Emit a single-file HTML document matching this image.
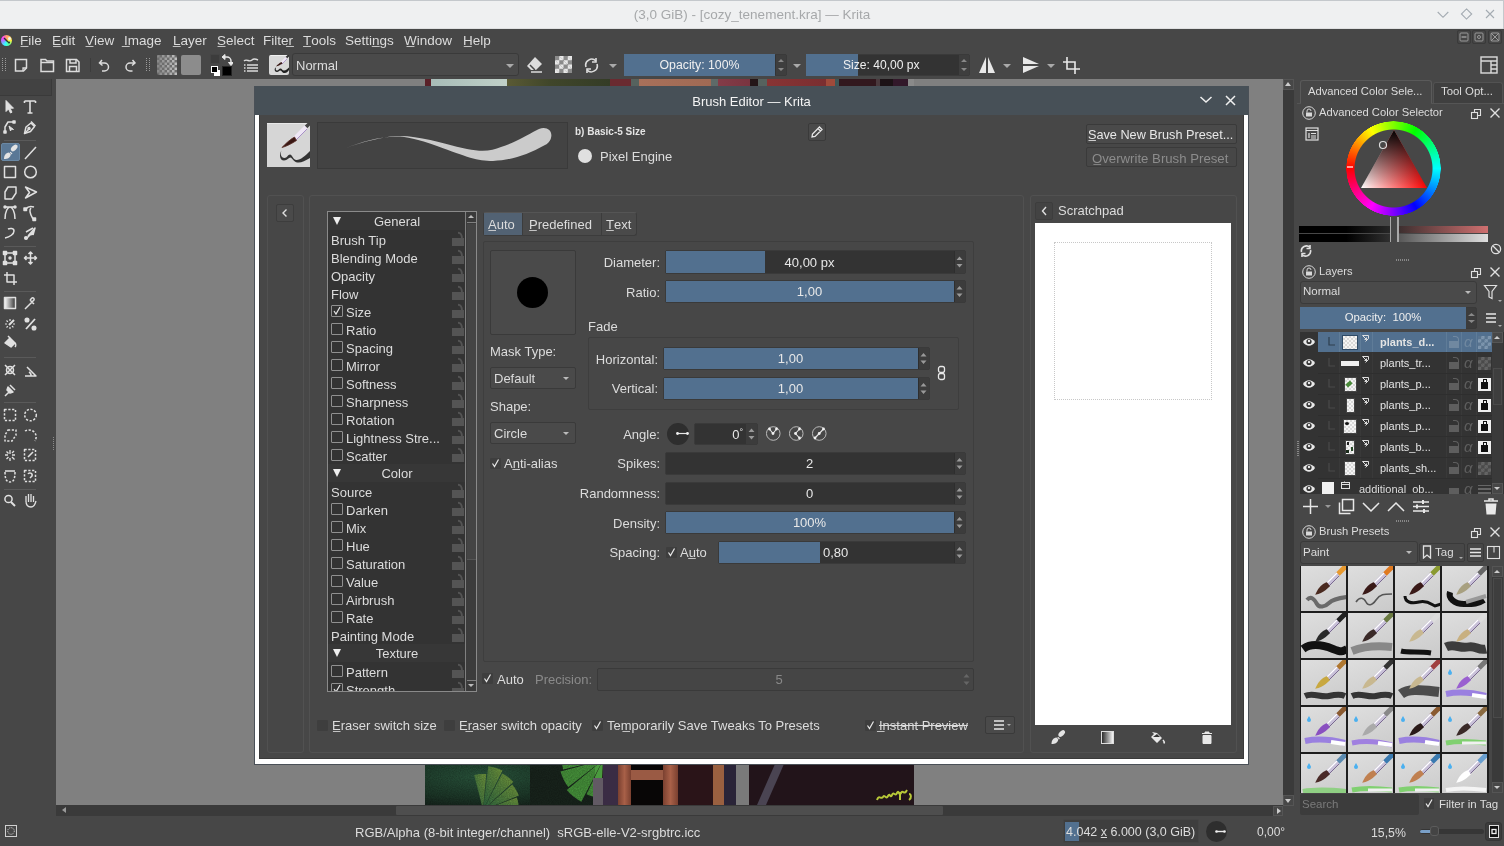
<!DOCTYPE html>
<html><head><meta charset="utf-8">
<style>
*{box-sizing:border-box;margin:0;padding:0}
html,body{width:1504px;height:846px;overflow:hidden;background:#474747;will-change:transform;font-family:"Liberation Sans",sans-serif;color:#dcdcdc;font-size:13px}
.a{position:absolute}
.t{position:absolute;white-space:nowrap;line-height:1}
</style></head><body>
<!-- title bar -->
<div class="a" style="left:0;top:0;width:1504px;height:29px;background:#eff0f1;border-bottom:1px solid #dfe0e1"></div>
<div class="t" style="left:0;width:1504px;text-align:center;top:8px;color:#a6a8aa;font-size:13.5px">(3,0 GiB) - [cozy_tenement.kra] — Krita</div>
<div class="a" style="left:0;top:0;width:1504px;height:1px;background:#c4c8cc"></div>
<div class="a" style="left:1503px;top:0;width:1px;height:29px;background:#c4c8cc"></div>
<svg class="a" style="left:1430px;top:4px" width="70" height="20" fill="none" stroke="#a4abb2" stroke-width="1.1"><path d="M7.7 8l5.3 5.3L18.3 8M36.5 4.9l5.2 5.1-5.2 5.1-5.1-5.1zM56 6l8 8M64 6l-8 8"/></svg>

<!-- menubar + toolbar -->
<div class="a" style="left:0;top:29px;width:1504px;height:50px;background:#474747"></div>

<!-- menubar -->
<div class="a" style="left:1px;top:34.5px;width:11px;height:11px;border-radius:50%;background:conic-gradient(from 0deg,#ff9a70,#ffee40 25%,#60ff90 40%,#30ffff 55%,#a080ff 72%,#ff40ff 85%,#ff9a70)"></div><svg class="a" style="left:1px;top:34.5px" width="11" height="11"><path d="M3 3l4 4" stroke="#2a3a2a" stroke-width="1.5"/><circle cx="8.5" cy="3.5" r="1.5" fill="#eef4ee"/><circle cx="8" cy="7.5" r="1" fill="#1a2a3a"/></svg>
<div class="t" style="top:34px;left:20px;font-size:13.5px">
<span class="a" style="left:0">F&#818;ile</span><span class="a" style="left:32px">E&#818;dit</span><span class="a" style="left:65px">V&#818;iew</span><span class="a" style="left:104px">I&#818;mage</span><span class="a" style="left:153px">L&#818;ayer</span><span class="a" style="left:197px">S&#818;elect</span><span class="a" style="left:243px">Filter&#818;</span><span class="a" style="left:283px">T&#818;ools</span><span class="a" style="left:325px">Settin&#818;gs</span><span class="a" style="left:384px">W&#818;indow</span><span class="a" style="left:443px">H&#818;elp</span>
</div>

<!-- toolbar -->
<svg class="a" style="left:0;top:50px" width="1504" height="29" viewBox="0 50 1504 29" fill="none" stroke="#dcdcdc" stroke-width="1.5">
<g stroke="#9a9a9a" stroke-width="1" stroke-dasharray="1 1"><path d="M2.5 58v14M5.5 58v14M146.5 58v14M149.5 58v14"/></g>
<path d="M15.5 59.5h11v8.5l-3 3h-8z"/><path d="M23 71v-3h3.5" stroke-width="1.3"/>
<path d="M41 71.5v-12h4.5l1.5 1.5h6.5v10.5z"/><path d="M41 62.5h12.5" />
<path d="M66.5 59.5h10l2.5 2.5v9.5h-12.5z"/><path d="M70 59.5v3.5h6v-3.5M69.5 71.5v-5h7v5"/>
<path d="M90.5 58v14" stroke="#3c3c3c" stroke-width="1"/>
<path d="M102 60l-2.5 3 3 2.5M100 63h4.5a4 4 0 0 1 0 8h-2.5"/>
<path d="M132.5 60l2.5 3-3 2.5M134.5 63h-4.5a4 4 0 0 0 0 8h2.5"/>
</svg>
<!-- checker gradient -->
<svg class="a" style="left:157px;top:55px" width="20" height="20"><rect width="20" height="20" rx="2" fill="#6e6e6e"/><rect x="0.0" y="0.0" width="2.5" height="2.5" fill="#bdbdbd" fill-opacity="0.35"/><rect x="5.0" y="0.0" width="2.5" height="2.5" fill="#bdbdbd" fill-opacity="0.54"/><rect x="10.0" y="0.0" width="2.5" height="2.5" fill="#bdbdbd" fill-opacity="0.72"/><rect x="15.0" y="0.0" width="2.5" height="2.5" fill="#bdbdbd" fill-opacity="0.91"/><rect x="2.5" y="2.5" width="2.5" height="2.5" fill="#bdbdbd" fill-opacity="0.44"/><rect x="7.5" y="2.5" width="2.5" height="2.5" fill="#bdbdbd" fill-opacity="0.63"/><rect x="12.5" y="2.5" width="2.5" height="2.5" fill="#bdbdbd" fill-opacity="0.81"/><rect x="17.5" y="2.5" width="2.5" height="2.5" fill="#bdbdbd" fill-opacity="1.00"/><rect x="0.0" y="5.0" width="2.5" height="2.5" fill="#bdbdbd" fill-opacity="0.35"/><rect x="5.0" y="5.0" width="2.5" height="2.5" fill="#bdbdbd" fill-opacity="0.54"/><rect x="10.0" y="5.0" width="2.5" height="2.5" fill="#bdbdbd" fill-opacity="0.72"/><rect x="15.0" y="5.0" width="2.5" height="2.5" fill="#bdbdbd" fill-opacity="0.91"/><rect x="2.5" y="7.5" width="2.5" height="2.5" fill="#bdbdbd" fill-opacity="0.44"/><rect x="7.5" y="7.5" width="2.5" height="2.5" fill="#bdbdbd" fill-opacity="0.63"/><rect x="12.5" y="7.5" width="2.5" height="2.5" fill="#bdbdbd" fill-opacity="0.81"/><rect x="17.5" y="7.5" width="2.5" height="2.5" fill="#bdbdbd" fill-opacity="1.00"/><rect x="0.0" y="10.0" width="2.5" height="2.5" fill="#bdbdbd" fill-opacity="0.35"/><rect x="5.0" y="10.0" width="2.5" height="2.5" fill="#bdbdbd" fill-opacity="0.54"/><rect x="10.0" y="10.0" width="2.5" height="2.5" fill="#bdbdbd" fill-opacity="0.72"/><rect x="15.0" y="10.0" width="2.5" height="2.5" fill="#bdbdbd" fill-opacity="0.91"/><rect x="2.5" y="12.5" width="2.5" height="2.5" fill="#bdbdbd" fill-opacity="0.44"/><rect x="7.5" y="12.5" width="2.5" height="2.5" fill="#bdbdbd" fill-opacity="0.63"/><rect x="12.5" y="12.5" width="2.5" height="2.5" fill="#bdbdbd" fill-opacity="0.81"/><rect x="17.5" y="12.5" width="2.5" height="2.5" fill="#bdbdbd" fill-opacity="1.00"/><rect x="0.0" y="15.0" width="2.5" height="2.5" fill="#bdbdbd" fill-opacity="0.35"/><rect x="5.0" y="15.0" width="2.5" height="2.5" fill="#bdbdbd" fill-opacity="0.54"/><rect x="10.0" y="15.0" width="2.5" height="2.5" fill="#bdbdbd" fill-opacity="0.72"/><rect x="15.0" y="15.0" width="2.5" height="2.5" fill="#bdbdbd" fill-opacity="0.91"/><rect x="2.5" y="17.5" width="2.5" height="2.5" fill="#bdbdbd" fill-opacity="0.44"/><rect x="7.5" y="17.5" width="2.5" height="2.5" fill="#bdbdbd" fill-opacity="0.63"/><rect x="12.5" y="17.5" width="2.5" height="2.5" fill="#bdbdbd" fill-opacity="0.81"/><rect x="17.5" y="17.5" width="2.5" height="2.5" fill="#bdbdbd" fill-opacity="1.00"/></svg>
<div class="a" style="left:181px;top:55px;width:20px;height:20px;background:#8c8c8c;border-radius:2px"></div>
<!-- fg bg -->
<div class="a" style="left:210px;top:54px;width:10px;height:10px;background:#3c3c3c;border:1px solid #444"></div>
<div class="a" style="left:222px;top:66px;width:10px;height:10px;background:#000;border:1px solid #222"></div>
<div class="a" style="left:214px;top:70px;width:6px;height:6px;background:#fff"></div>
<div class="a" style="left:211px;top:66px;width:7px;height:7px;background:#000;border:1px solid #fff"></div>
<svg class="a" style="left:221px;top:54px" width="12" height="12" fill="none" stroke="#e8e8e8" stroke-width="1.5"><path d="M2 3h4a4 4 0 0 1 4 4v3"/><path d="M1 3l3-2.5v5zM10 11.5l-2.5-3h5z" fill="#e8e8e8" stroke-width="1"/></svg>
<svg class="a" style="left:243px;top:57px" width="16" height="16" fill="none" stroke="#dcdcdc" stroke-width="1.4"><path d="M1 4c3-3 5 2 8-1 2-2 4-1 6 0"/><path d="M1 8h1.5M4 8h11M1 11h1.5M4 11h11M1 14h1.5M4 14h11"/></svg>
<div class="a" style="left:269px;top:55px;width:20px;height:20px;background:#d8d8d8;border-radius:2px;border-top:1px solid #f0f0f0"></div><svg class="a" style="left:269px;top:55px" width="20" height="20"><path d="M20 0L17 3" stroke="#333" stroke-width="2"/><path d="M17.5 2.5L12 8" stroke="#eee6f4" stroke-width="2"/><path d="M18 4L12.5 9.5" stroke="#a890c8" stroke-width=".8"/><path d="M12.5 7C10.5 8 8.5 9.5 7 11.5 9 11 11 10 13.5 8.5Z" fill="#3a1814"/><path d="M6 13c-1 2 0 4 2 4s2-2 3.5-1.5S13 18 15.5 18s3.5-2 4.5-3v-2.5c-1.5 1.5-3 3-5 3s-2-2-3.5-2-2 2-3.5 2-1.5-1.5-1-3z" fill="#222"/></svg>
<div class="a" style="left:292px;top:53px;width:227px;height:23px;background:#4a4a4a;border:1px solid #3a3a3a;border-radius:3px"></div>
<div class="t" style="left:296px;top:59px;font-size:13px">Normal</div>
<div class="a" style="left:506px;top:64px;border-left:4px solid transparent;border-right:4px solid transparent;border-top:4px solid #aaa"></div>
<!-- eraser, checker, refresh -->
<svg class="a" style="left:526px;top:56px" width="17" height="17"><path d="M9 1l7 7-6 6H5l-4-4z" fill="#dcdcdc"/><path d="M4 9l5 5" stroke="#474747" stroke-width="1.5"/><path d="M5 16h11" stroke="#dcdcdc" stroke-width="1.5"/></svg>
<div class="a" style="left:555px;top:56px;width:17px;height:17px;background-image:linear-gradient(45deg,#e8e8e8 25%,transparent 25%,transparent 75%,#e8e8e8 75%),linear-gradient(45deg,#e8e8e8 25%,transparent 25%,transparent 75%,#e8e8e8 75%);background-size:8.5px 8.5px;background-position:0 0,4.25px 4.25px;background-color:#8a8a8a"></div>
<svg class="a" style="left:583px;top:57px" width="17" height="17" fill="none" stroke="#dcdcdc" stroke-width="1.6"><path d="M3 10a6 6 0 0 1 10-6M14 7a6 6 0 0 1-10 6"/><path d="M13 1v4h-4M4 16v-4h4"/></svg>
<div class="a" style="left:609px;top:64px;border-left:4px solid transparent;border-right:4px solid transparent;border-top:4px solid #aaa"></div>
<!-- opacity slider -->
<div class="a" style="left:624px;top:54px;width:163px;height:22px;background:#333;border:1px solid #3a3a3a;border-radius:2px"></div>
<div class="a" style="left:624px;top:54px;width:151px;height:22px;background:#52708f"></div>
<div class="t" style="left:624px;width:151px;text-align:center;top:59px;font-size:12.3px;color:#f0f0f0">Opacity: 100%</div>
<div class="a" style="left:776px;top:55px;width:10px;height:20px;background:#3e3e3e"></div>
<svg class="a" style="left:776px;top:55px" width="10" height="20" fill="#888"><path d="M2 7l3-3 3 3zM2 13l3 3 3-3z"/></svg>
<div class="a" style="left:793px;top:64px;border-left:4px solid transparent;border-right:4px solid transparent;border-top:4px solid #aaa"></div>
<!-- size slider -->
<div class="a" style="left:806px;top:54px;width:164px;height:22px;background:#333;border:1px solid #3a3a3a;border-radius:2px"></div>
<div class="a" style="left:806px;top:54px;width:52px;height:22px;background:#52708f"></div>
<div class="t" style="left:843px;top:59px;font-size:12.1px;color:#f0f0f0">Size: 40,00 px</div>
<div class="a" style="left:959px;top:55px;width:10px;height:20px;background:#3e3e3e"></div>
<svg class="a" style="left:959px;top:55px" width="10" height="20" fill="#888"><path d="M2 7l3-3 3 3zM2 13l3 3 3-3z"/></svg>
<!-- mirror -->
<svg class="a" style="left:978px;top:56px" width="18" height="18" fill="#e8e8e8"><path d="M8 1L1 17h7zM10 1l7 16h-7z"/></svg>
<div class="a" style="left:1003px;top:64px;border-left:4px solid transparent;border-right:4px solid transparent;border-top:4px solid #aaa"></div>
<svg class="a" style="left:1022px;top:56px" width="18" height="18" fill="#e8e8e8"><path d="M1 1l16 7H1zM1 10h16L1 17z"/></svg>
<div class="a" style="left:1047px;top:64px;border-left:4px solid transparent;border-right:4px solid transparent;border-top:4px solid #aaa"></div>
<svg class="a" style="left:1062px;top:56px" width="19" height="19" fill="none" stroke="#e8e8e8" stroke-width="1.6"><path d="M5 1v12h13M1 6h12v12"/></svg>
<svg class="a" style="left:1480px;top:56px" width="18" height="18" fill="none" stroke="#dcdcdc" stroke-width="1.4"><rect x="1" y="1" width="16" height="16"/><path d="M1 5h16M11 5v12M11 9h6M11 13h6"/></svg>
<svg class="a" style="left:1457px;top:30px" width="47" height="14" fill="none" stroke="#9a9a9a" stroke-width="1"><rect x="0.5" y="0.5" width="13" height="13" rx="1.5" stroke="#3a3a3a"/><rect x="15.5" y="0.5" width="13" height="13" rx="1.5" stroke="#3a3a3a"/><rect x="31.5" y="0.5" width="13" height="13" rx="1.5" stroke="#3a3a3a"/>
<rect x="3" y="3" width="8" height="8" rx="1"/><path d="M4.5 7h5" stroke-width="1.5"/>
<rect x="18" y="3" width="8" height="8" rx="1"/><circle cx="22" cy="7" r="1.5"/>
<rect x="34" y="3" width="8" height="8" rx="1"/><path d="M34 3l8 8M42 3l-8 8"/></svg>
<!-- canvas -->
<div class="a" style="left:56px;top:79px;width:1227px;height:727px;background:#808080"></div>

<!-- canvas painting strips -->
<div class="a" style="left:425px;top:79px;width:489px;height:7px;background:linear-gradient(90deg,#5a2028 0,#5a2028 6px,#a8bcb8 6px,#c0d0c8 82px,#5a5a34 82px,#40462a 125px,#343c26 185px,#6a2a30 185px,#6a2a30 206px,#56625e 206px,#56625e 214px,#a8705a 214px,#a06a54 286px,#5e6a68 286px,#5e6a68 293px,#843c48 293px,#7a3440 325px,#241618 325px,#241618 333px,#56625e 333px,#56625e 342px,#883434 342px,#7a2e30 401px,#a04a3a 401px,#a04a3a 410px,#3e5656 410px,#3e5656 414px,#32181e 414px,#32181e 451px,#4a3a3e 451px,#4a3a3e 455px,#1c1216 455px,#1c1216 468px,#32182a 468px,#32182a 483px,#8a8a8a 483px)"></div>
<svg class="a" style="left:425px;top:764px" width="489" height="41" viewBox="0 0 489 41">
<defs><radialGradient id="fg1" cx="0.35" cy="0.3" r="0.9"><stop offset="0" stop-color="#2c5a40"/><stop offset=".6" stop-color="#1e3a2a"/><stop offset="1" stop-color="#141c18"/></radialGradient>
<linearGradient id="lf1" x1="0" x2="1" y1="1" y2="0"><stop offset="0" stop-color="#2e6a44"/><stop offset="1" stop-color="#78a040"/></linearGradient>
<linearGradient id="rl" x1="0" x2="1"><stop offset="0" stop-color="#7a4030"/><stop offset=".5" stop-color="#a86048"/><stop offset="1" stop-color="#7a4030"/></linearGradient>
<filter id="nz" x="0" y="0" width="1" height="1"><feTurbulence type="fractalNoise" baseFrequency=".9" numOctaves="2" seed="3"/><feColorMatrix values="0 0 0 0 0  0 0 0 0 0  0 0 0 0 0  0 0 0 .55 0"/><feComposite in2="SourceGraphic" operator="in"/></filter></defs>
<rect width="489" height="41" fill="#22141a"/>
<rect width="170" height="41" fill="url(#fg1)"/>
<rect x="105" width="65" height="41" fill="#1a261e"/>
<path d="M58.0 46.0 L49.2 11.1 L52.2 10.5 L55.2 10.1 L58.2 10.0 L61.2 10.1Z" fill="url(#lf1)"/><path d="M58.0 46.0 L63.3 2.3 L66.9 2.9 L70.5 3.8 L74.0 5.0 L77.4 6.5Z" fill="url(#lf1)"/><path d="M58.0 46.0 L77.3 9.5 L80.3 11.2 L83.2 13.2 L85.8 15.4 L88.3 17.9Z" fill="url(#lf1)"/><path d="M58.0 46.0 L87.1 20.6 L89.2 23.1 L91.0 25.8 L92.5 28.6 L93.9 31.6Z" fill="url(#lf1)"/><path d="M58.0 46.0 L91.8 33.6 L92.7 36.5 L93.4 39.4 L93.8 42.4 L94.0 45.4Z" fill="url(#lf1)"/>
<path d="M178.0 -4.0 L176.1 34.0 L172.3 33.6 L168.6 32.8 L165.0 31.7 L161.5 30.2Z" fill="#4a9a3e"/><path d="M178.0 -4.0 L156.3 37.7 L152.3 35.3 L148.5 32.6 L145.0 29.5 L141.8 26.0Z" fill="#4a9a3e"/><path d="M178.0 -4.0 L143.3 23.0 L140.8 19.4 L138.6 15.6 L136.9 11.6 L135.5 7.5Z" fill="#4a9a3e"/><path d="M178.0 -4.0 L138.1 5.4 L137.4 1.4 L137.0 -2.6 L137.1 -6.7 L137.6 -10.8Z" fill="#4a9a3e"/><path d="M178.0 -4.0 L140.7 -11.4 L141.7 -15.1 L142.9 -18.7 L144.6 -22.1 L146.5 -25.3Z" fill="#4a9a3e"/>
<rect width="170" height="41" fill="#000" filter="url(#nz)" opacity=".6"/>
<rect x="168" y="14" width="10" height="27" fill="#625a64"/>
<rect x="178" width="15" height="41" fill="#3a2c44"/>
<rect x="193" width="13" height="41" fill="url(#rl)"/>
<rect x="206" width="32" height="41" fill="#080606"/>
<rect x="206" y="6" width="32" height="10" fill="#9a5a44"/>
<rect x="238" width="15" height="41" fill="url(#rl)"/>
<rect x="253" width="35" height="41" fill="#2a1418"/>
<rect x="288" width="11" height="41" fill="#9a6040"/>
<rect x="299" width="12" height="41" fill="#2a2438"/>
<rect x="311" width="13" height="41" fill="#7a7a7a"/>
<path d="M350 0h9l-18 41h-9z" fill="#4a4452"/>
<path d="M452 36c2-6 4 0 6-3s3 3 5-1 2 3 4-1 3 2 5-2 2 4 4 0 3 3 6-3M475 28v8M484 30c2 0 3 4 0 6" stroke="#b8c838" stroke-width="2" fill="none"/>
</svg>
<!-- scrollbars -->
<div class="a" style="left:56px;top:805px;width:1227px;height:11px;background:#3a3a3a"></div>
<div class="a" style="left:396px;top:806px;width:547px;height:9px;background:#4e4e4e;border-radius:1px"></div>
<div class="a" style="left:62px;top:807px;border-top:3.5px solid transparent;border-bottom:3.5px solid transparent;border-right:4px solid #999"></div>
<div class="a" style="left:1273px;top:806px;width:10px;height:10px;background:#474747;border:1px solid #555"></div>
<div class="a" style="left:1276.5px;top:807.5px;border-top:3.5px solid transparent;border-bottom:3.5px solid transparent;border-left:4px solid #ccc"></div>
<div class="a" style="left:1283px;top:79px;width:11px;height:727px;background:#3a3a3a"></div>
<div class="a" style="left:1283px;top:79px;width:11px;height:11px;background:#474747;border:1px solid #555"></div>
<div class="a" style="left:1285px;top:82px;border-left:3.5px solid transparent;border-right:3.5px solid transparent;border-bottom:4px solid #ccc"></div>
<div class="a" style="left:1283px;top:795px;width:11px;height:11px;background:#474747;border:1px solid #555"></div>
<div class="a" style="left:1285px;top:799px;border-left:3.5px solid transparent;border-right:3.5px solid transparent;border-top:4px solid #ccc"></div>
<div class="a" style="left:1284px;top:816px;width:12px;height:2px;background:#474747"></div>
<!-- left toolbox -->
<div class="a" style="left:0;top:79px;width:56px;height:739px;background:#474747"></div>

<div class="a" style="left:0;top:79px;width:52px;height:17px;background:#424242;border-right:1px solid #3a3a3a;border-bottom:1px solid #3a3a3a"></div>
<div class="a" style="left:1px;top:143px;width:19px;height:18px;background:#5a7896;border:1px solid #6a88a4;border-radius:2px"></div>
<svg class="a" style="left:0;top:96px" width="56" height="420" viewBox="0 96 56 420" fill="none" stroke="#e0e0e0" stroke-width="1.5" stroke-linejoin="round">
<g stroke="#5a5a5a" stroke-width="1"><path d="M4 140.5h32M4 246.5h32M4 291.5h32M4 357.5h32M4 402.5h32M4 489.5h32"/></g>
<path d="M6 100.5v11l2.5-2.5 2 4 1.5-.8-2-4h3.5z" fill="#e0e0e0" stroke-width="1"/>
<path d="M24.5 101h11M30 101v12M27.5 113h5M24.5 101v2M35.5 101v2" stroke-width="1.6"/>
<path d="M5 132v-5l3-5h5" /><rect x="4" y="131" width="2" height="2" fill="#e0e0e0"/><rect x="13" y="121" width="2" height="2" fill="#e0e0e0"/><path d="M9 126l1.5 5 1-2 2 .5z" fill="#e0e0e0" stroke-width="1"/>
<path d="M24.5 133.5l1.5-6.5 5-4 3.5 3.5-4 5z" fill="none"/><path d="M24.5 133.5l4-4M31 121.5l4.5 4.5" /><circle cx="29" cy="128.5" r="1" fill="#e0e0e0"/>
<path d="M4 159c0-3.5 1.5-6 5-6.5l1.8 1.8c-.5 3.5-3 4.7-6.8 4.7z" fill="#e4e4e4" stroke="none"/><path d="M10.2 152.2l1.8 1.8" stroke="#e4e4e4" stroke-width="1.2"/><ellipse cx="14.2" cy="148" rx="2.3" ry="4" transform="rotate(45 14.2 148)" fill="#e4e4e4" stroke="none"/>
<path d="M25 159l11-12"/>
<rect x="4.5" y="166.5" width="11" height="11"/>
<circle cx="30.5" cy="172" r="5.8"/>
<path d="M8 187h8v6l-4 6H5v-7z"/>
<path d="M25.5 187l11 5-11 6 4-5.5z"/>
<path d="M5 219c0-8 3-12 5-12s5 4 5 12M5 207h10" /><circle cx="5" cy="207" r="1" fill="#e0e0e0"/><circle cx="15" cy="207" r="1" fill="#e0e0e0"/>
<path d="M26 209c2-3 5-3 8-2M31 208c-2 2-1 6 2 11"/><rect x="24" y="208" width="2.5" height="2.5" fill="#e0e0e0"/><rect x="33" y="218" width="2.5" height="2.5" fill="#e0e0e0"/>
<path d="M5 238c5-1 9-4 9-7s-4-3-6-2"/>
<path d="M26 239l4-4M28 236l7-8-2 7M33 228l-7 4" fill="#e0e0e0"/><circle cx="26" cy="238" r="1.3" fill="#e0e0e0"/>
<rect x="5" y="253" width="10" height="10"/><rect x="3.5" y="251.5" width="3" height="3" fill="#e0e0e0"/><rect x="13.5" y="251.5" width="3" height="3" fill="#e0e0e0"/><rect x="3.5" y="261.5" width="3" height="3" fill="#e0e0e0"/><rect x="13.5" y="261.5" width="3" height="3" fill="#e0e0e0"/><circle cx="10" cy="258" r="1" fill="#e0e0e0"/>
<path d="M30.5 252v12M24.5 258h12M28.5 254l2-2 2 2M28.5 262l2 2 2-2M26.5 256l-2 2 2 2M34.5 256l2 2-2 2"/>
<path d="M7 272v10h10M4 275h10v10"/>
<rect x="4.5" y="297.5" width="11" height="11" fill="url(#gr)"/>
<defs><linearGradient id="gr"><stop offset="0" stop-color="#fff"/><stop offset="1" stop-color="#333"/></linearGradient></defs>
<path d="M25 309l7-7M30 300l4 4M32 302l2-2a1.5 1.5 0 0 0-2-2l-2 2"/>
<path d="M10 319v2M10 327v2M5 324h2M13 324h2M6.5 320.5l1.4 1.4M12 326l1.4 1.4M6.5 327.5l1.4-1.4" stroke-width="1.2"/><path d="M9 325l5-5" stroke-width="2"/>
<path d="M26 329l9-10" stroke-width="1.8"/><circle cx="27" cy="320" r="1.8" fill="#e0e0e0"/><circle cx="34" cy="328" r="1.8" fill="#e0e0e0"/>
<path d="M5 343l5-5 5 5-4 4z" fill="#e0e0e0"/><path d="M10 338l-2-2M15 343c1 1 1 3 0 4"/>
<path d="M5 365l10 10M15 365l-10 10"/><circle cx="10" cy="370" r="3.5"/>
<path d="M25 376h11l-9-9"/><path d="M31 376a4 4 0 0 0-2-4"/>
<path d="M5 396l4-4M8 387l5 5-3 1-3-3z" fill="#e0e0e0"/><path d="M10 385l5 5"/>
<rect x="4.5" y="409.5" width="11" height="11" stroke-dasharray="2.2 1.6"/>
<circle cx="30.5" cy="415" r="5.8" stroke-dasharray="2.2 1.6"/>
<path d="M8 430h8v5l-4 6H5v-6z" stroke-dasharray="2.2 1.6"/>
<path d="M25 431c3-2 8-1 10 2s1 6 0 8" stroke-dasharray="2.2 1.6"/>
<path d="M10 450v4M10 458v3M5 455h3M12 455h3M6.5 451.5l2 2M12 457l2.5 2.5M6.5 459l2-2M12 453l2-2" stroke-width="1.3"/>
<rect x="24.5" y="449.5" width="11" height="11" stroke-dasharray="2.2 1.6"/><path d="M28 457l5-5" stroke-width="1.6"/>
<path d="M5 472c0 8 2 10 5 10s5-2 5-10" stroke-dasharray="2.2 1.6"/><path d="M5 471h10"/>
<rect x="24.5" y="470.5" width="11" height="11" stroke-dasharray="2.2 1.6"/><path d="M28 474c1-2 5-1 4 2l-2 2"/>
<circle cx="8.5" cy="499" r="3.6"/><path d="M11 502l4 4" stroke-width="2"/>
<path d="M26 502v-6M28.5 502v-8M31 502v-8M33.5 502v-6M26 501c0 4 2 6 5 6s4-2 5-6" stroke-width="1.3"/>
<g stroke="#8a8a8a" stroke-width="1" stroke-dasharray="1 1"><path d="M53.5 437v14"/></g>
</svg>
<!-- right docker -->
<div class="a" style="left:1296px;top:79px;width:208px;height:739px;background:#474747"></div>
<!-- status bar -->
<div class="a" style="left:0;top:818px;width:1504px;height:28px;background:#474747"></div>
<!-- dialog -->
<div class="a" style="left:254px;top:86px;width:995px;height:679px;background:#4a5057"></div>
<div class="a" style="left:255px;top:86px;width:993px;height:29px;background:#475057"></div>
<div class="a" style="left:255px;top:115px;width:993px;height:649px;background:#fff"></div>
<div class="a" style="left:259px;top:115px;width:985px;height:644px;background:#3a3a3a"></div>
<div class="a" style="left:260px;top:115px;width:983px;height:643px;background:#474747"></div>
<div class="t" style="left:255px;width:993px;text-align:center;top:95px;color:#f4f4f4">Brush Editor — Krita</div>
<svg class="a" style="left:1199px;top:95px" width="14" height="10" fill="none" stroke="#f0f0f0" stroke-width="1.5"><path d="M1.5 2l5.5 5 5.5-5"/></svg>
<svg class="a" style="left:1225px;top:95px" width="11" height="11" fill="none" stroke="#f0f0f0" stroke-width="1.5"><path d="M1 1l9 9M10 1L1 10"/></svg>
<div class="a" style="left:267px;top:123px;width:43px;height:44px;background:#d6d6d6;border-top:1px solid #e8e8e8"></div>
<svg class="a" style="left:267px;top:123px" width="43" height="44"><path d="M44 -1L39 4" stroke="#444" stroke-width="3.5"/><path d="M39 4L27 16" stroke="#eee6f4" stroke-width="4"/><path d="M40 6L28.5 17.5" stroke="#a890c8" stroke-width="1"/><path d="M27.5 14C24 16 19 20 15 24.5C19 23.5 24 21 29.5 17.5Z" fill="#3a1814" stroke="#5a3028" stroke-width=".8"/><path d="M14.5 27.5C13 31 14 35 17.5 35C20 35 21 31.5 23 31.5C25 31.5 26 36.5 29 37C33 37.5 38 33 43 28L43 35C38 38 34 40 30.5 39.5C26.5 39 25 34.5 23.5 34.5C21.5 34.5 20.5 37.5 17 37.5C12.5 37.5 12 31 14.5 27.5Z" fill="#333"/></svg>
<div class="a" style="left:317px;top:122px;width:251px;height:47px;background:#434343;border:1px solid #3a3a3a"></div>
<svg class="a" style="left:317px;top:122px" width="251" height="47"><path d="M29 26C45 20 65 15 79 14C100 13 120 20 150 27C165 30 175 29 184 25C200 20 215 10 222 7C230 4 236 9 234 16C233 20 229 23 228 23C210 33 195 38 176 39C160 39 150 35 120 24C100 17 90 14.5 79 14.5C60 15 45 20 29 26Z" fill="#cbcbcb"/></svg>
<div class="t" style="left:575px;top:127px;font-size:10px;font-weight:bold;color:#e4e4e4">b) Basic-5 Size</div>
<div class="a" style="left:578px;top:149px;width:14px;height:14px;border-radius:50%;background:#e0e0e0"></div>
<div class="t" style="left:600px;top:150px">Pixel Engine</div>
<div class="a" style="left:808px;top:123px;width:18px;height:18px;border:1px solid #3a3a3a;border-radius:2px;background:#4a4a4a"></div>
<svg class="a" style="left:810px;top:125px" width="14" height="14" fill="none" stroke="#e8e8e8" stroke-width="1.3"><path d="M2 12l.5-3L9.5 2l2.5 2.5-7 7zM8 3.5l2.5 2.5"/></svg>
<div class="a" style="left:1086px;top:124px;width:151px;height:20px;border:1px solid #3a3a3a;border-radius:2px;background:#4a4a4a"></div>
<div class="t" style="left:1088px;top:129px;font-size:12.7px;color:#e8e8e8">S&#818;ave New Brush Preset...</div>
<div class="a" style="left:1086px;top:147px;width:151px;height:20px;border:1px solid #3a3a3a;border-radius:2px;background:#474747"></div>
<div class="t" style="left:1092px;top:152px;font-size:13.2px;color:#8c8c8c">O&#818;verwrite Brush Preset</div>
<div class="a" style="left:267px;top:195px;width:37px;height:558px;border:1px solid #515151;border-radius:3px"></div>
<div class="a" style="left:276px;top:204px;width:18px;height:18px;border:1px solid #3d3d3d;border-radius:2px;background:#4a4a4a"></div>
<svg class="a" style="left:276px;top:204px" width="18" height="18" fill="none" stroke="#e0e0e0" stroke-width="1.4"><path d="M10.5 5.5l-3.5 3.5L10.5 12.5"/></svg>
<div class="a" style="left:309px;top:195px;width:715px;height:558px;border:1px solid #515151;border-radius:3px"></div>
<div class="a" style="left:1030px;top:195px;width:207px;height:558px;border:1px solid #515151;border-radius:3px"></div>
<div class="a" style="left:327px;top:211px;width:150px;height:481px;background:#333;border:1px solid #8a8a8a"></div>
<div class="a" style="left:328px;top:212px;width:137px;height:479px;overflow:hidden">
<div class="a" style="left:0;top:0px;width:137px;height:18px;background:#373737"></div>
<div class="a" style="left:5px;top:5px;border-left:4.5px solid transparent;border-right:4.5px solid transparent;border-top:8px solid #eee"></div>
<div class="t" style="left:0;width:137px;text-align:center;top:3px;padding-left:1px">General</div>
<div class="t" style="left:3px;top:22px">Brush Tip</div>
<div class="a" style="left:124px;top:26px;width:12px;height:8px;background:#545454"></div>
<svg class="a" style="left:128px;top:19px" width="8" height="8" fill="none" stroke="#545454" stroke-width="1.9"><path d="M2 1.8c2.5 0 4 2 4 6.2"/></svg>
<div class="t" style="left:3px;top:40px">Blending Mode</div>
<div class="a" style="left:124px;top:44px;width:12px;height:8px;background:#545454"></div>
<svg class="a" style="left:128px;top:37px" width="8" height="8" fill="none" stroke="#545454" stroke-width="1.9"><path d="M2 1.8c2.5 0 4 2 4 6.2"/></svg>
<div class="t" style="left:3px;top:58px">Opacity</div>
<div class="a" style="left:124px;top:62px;width:12px;height:8px;background:#545454"></div>
<svg class="a" style="left:128px;top:55px" width="8" height="8" fill="none" stroke="#545454" stroke-width="1.9"><path d="M2 1.8c2.5 0 4 2 4 6.2"/></svg>
<div class="t" style="left:3px;top:76px">Flow</div>
<div class="a" style="left:124px;top:80px;width:12px;height:8px;background:#545454"></div>
<svg class="a" style="left:128px;top:73px" width="8" height="8" fill="none" stroke="#545454" stroke-width="1.9"><path d="M2 1.8c2.5 0 4 2 4 6.2"/></svg>
<div class="a" style="left:3px;top:93px;width:12px;height:12px;border:1px solid #909090;border-radius:1px"></div>
<svg class="a" style="left:3px;top:93px" width="12" height="12" fill="none" stroke="#e8e8e8" stroke-width="1.2"><path d="M3 6l2 3 4-7"/></svg>
<div class="t" style="left:18px;top:94px">Size</div>
<div class="a" style="left:124px;top:98px;width:12px;height:8px;background:#545454"></div>
<svg class="a" style="left:128px;top:91px" width="8" height="8" fill="none" stroke="#545454" stroke-width="1.9"><path d="M2 1.8c2.5 0 4 2 4 6.2"/></svg>
<div class="a" style="left:3px;top:111px;width:12px;height:12px;border:1px solid #909090;border-radius:1px"></div>
<div class="t" style="left:18px;top:112px">Ratio</div>
<div class="a" style="left:124px;top:116px;width:12px;height:8px;background:#545454"></div>
<svg class="a" style="left:128px;top:109px" width="8" height="8" fill="none" stroke="#545454" stroke-width="1.9"><path d="M2 1.8c2.5 0 4 2 4 6.2"/></svg>
<div class="a" style="left:3px;top:129px;width:12px;height:12px;border:1px solid #909090;border-radius:1px"></div>
<div class="t" style="left:18px;top:130px">Spacing</div>
<div class="a" style="left:124px;top:134px;width:12px;height:8px;background:#545454"></div>
<svg class="a" style="left:128px;top:127px" width="8" height="8" fill="none" stroke="#545454" stroke-width="1.9"><path d="M2 1.8c2.5 0 4 2 4 6.2"/></svg>
<div class="a" style="left:3px;top:147px;width:12px;height:12px;border:1px solid #909090;border-radius:1px"></div>
<div class="t" style="left:18px;top:148px">Mirror</div>
<div class="a" style="left:124px;top:152px;width:12px;height:8px;background:#545454"></div>
<svg class="a" style="left:128px;top:145px" width="8" height="8" fill="none" stroke="#545454" stroke-width="1.9"><path d="M2 1.8c2.5 0 4 2 4 6.2"/></svg>
<div class="a" style="left:3px;top:165px;width:12px;height:12px;border:1px solid #909090;border-radius:1px"></div>
<div class="t" style="left:18px;top:166px">Softness</div>
<div class="a" style="left:124px;top:170px;width:12px;height:8px;background:#545454"></div>
<svg class="a" style="left:128px;top:163px" width="8" height="8" fill="none" stroke="#545454" stroke-width="1.9"><path d="M2 1.8c2.5 0 4 2 4 6.2"/></svg>
<div class="a" style="left:3px;top:183px;width:12px;height:12px;border:1px solid #909090;border-radius:1px"></div>
<div class="t" style="left:18px;top:184px">Sharpness</div>
<div class="a" style="left:124px;top:188px;width:12px;height:8px;background:#545454"></div>
<svg class="a" style="left:128px;top:181px" width="8" height="8" fill="none" stroke="#545454" stroke-width="1.9"><path d="M2 1.8c2.5 0 4 2 4 6.2"/></svg>
<div class="a" style="left:3px;top:201px;width:12px;height:12px;border:1px solid #909090;border-radius:1px"></div>
<div class="t" style="left:18px;top:202px">Rotation</div>
<div class="a" style="left:124px;top:206px;width:12px;height:8px;background:#545454"></div>
<svg class="a" style="left:128px;top:199px" width="8" height="8" fill="none" stroke="#545454" stroke-width="1.9"><path d="M2 1.8c2.5 0 4 2 4 6.2"/></svg>
<div class="a" style="left:3px;top:219px;width:12px;height:12px;border:1px solid #909090;border-radius:1px"></div>
<div class="t" style="left:18px;top:220px">Lightness Stre...</div>
<div class="a" style="left:124px;top:224px;width:12px;height:8px;background:#545454"></div>
<svg class="a" style="left:128px;top:217px" width="8" height="8" fill="none" stroke="#545454" stroke-width="1.9"><path d="M2 1.8c2.5 0 4 2 4 6.2"/></svg>
<div class="a" style="left:3px;top:237px;width:12px;height:12px;border:1px solid #909090;border-radius:1px"></div>
<div class="t" style="left:18px;top:238px">Scatter</div>
<div class="a" style="left:124px;top:242px;width:12px;height:8px;background:#545454"></div>
<svg class="a" style="left:128px;top:235px" width="8" height="8" fill="none" stroke="#545454" stroke-width="1.9"><path d="M2 1.8c2.5 0 4 2 4 6.2"/></svg>
<div class="a" style="left:0;top:252px;width:137px;height:18px;background:#373737"></div>
<div class="a" style="left:5px;top:257px;border-left:4.5px solid transparent;border-right:4.5px solid transparent;border-top:8px solid #eee"></div>
<div class="t" style="left:0;width:137px;text-align:center;top:255px;padding-left:1px">Color</div>
<div class="t" style="left:3px;top:274px">Source</div>
<div class="a" style="left:124px;top:278px;width:12px;height:8px;background:#545454"></div>
<svg class="a" style="left:128px;top:271px" width="8" height="8" fill="none" stroke="#545454" stroke-width="1.9"><path d="M2 1.8c2.5 0 4 2 4 6.2"/></svg>
<div class="a" style="left:3px;top:291px;width:12px;height:12px;border:1px solid #909090;border-radius:1px"></div>
<div class="t" style="left:18px;top:292px">Darken</div>
<div class="a" style="left:124px;top:296px;width:12px;height:8px;background:#545454"></div>
<svg class="a" style="left:128px;top:289px" width="8" height="8" fill="none" stroke="#545454" stroke-width="1.9"><path d="M2 1.8c2.5 0 4 2 4 6.2"/></svg>
<div class="a" style="left:3px;top:309px;width:12px;height:12px;border:1px solid #909090;border-radius:1px"></div>
<div class="t" style="left:18px;top:310px">Mix</div>
<div class="a" style="left:124px;top:314px;width:12px;height:8px;background:#545454"></div>
<svg class="a" style="left:128px;top:307px" width="8" height="8" fill="none" stroke="#545454" stroke-width="1.9"><path d="M2 1.8c2.5 0 4 2 4 6.2"/></svg>
<div class="a" style="left:3px;top:327px;width:12px;height:12px;border:1px solid #909090;border-radius:1px"></div>
<div class="t" style="left:18px;top:328px">Hue</div>
<div class="a" style="left:124px;top:332px;width:12px;height:8px;background:#545454"></div>
<svg class="a" style="left:128px;top:325px" width="8" height="8" fill="none" stroke="#545454" stroke-width="1.9"><path d="M2 1.8c2.5 0 4 2 4 6.2"/></svg>
<div class="a" style="left:3px;top:345px;width:12px;height:12px;border:1px solid #909090;border-radius:1px"></div>
<div class="t" style="left:18px;top:346px">Saturation</div>
<div class="a" style="left:124px;top:350px;width:12px;height:8px;background:#545454"></div>
<svg class="a" style="left:128px;top:343px" width="8" height="8" fill="none" stroke="#545454" stroke-width="1.9"><path d="M2 1.8c2.5 0 4 2 4 6.2"/></svg>
<div class="a" style="left:3px;top:363px;width:12px;height:12px;border:1px solid #909090;border-radius:1px"></div>
<div class="t" style="left:18px;top:364px">Value</div>
<div class="a" style="left:124px;top:368px;width:12px;height:8px;background:#545454"></div>
<svg class="a" style="left:128px;top:361px" width="8" height="8" fill="none" stroke="#545454" stroke-width="1.9"><path d="M2 1.8c2.5 0 4 2 4 6.2"/></svg>
<div class="a" style="left:3px;top:381px;width:12px;height:12px;border:1px solid #909090;border-radius:1px"></div>
<div class="t" style="left:18px;top:382px">Airbrush</div>
<div class="a" style="left:124px;top:386px;width:12px;height:8px;background:#545454"></div>
<svg class="a" style="left:128px;top:379px" width="8" height="8" fill="none" stroke="#545454" stroke-width="1.9"><path d="M2 1.8c2.5 0 4 2 4 6.2"/></svg>
<div class="a" style="left:3px;top:399px;width:12px;height:12px;border:1px solid #909090;border-radius:1px"></div>
<div class="t" style="left:18px;top:400px">Rate</div>
<div class="a" style="left:124px;top:404px;width:12px;height:8px;background:#545454"></div>
<svg class="a" style="left:128px;top:397px" width="8" height="8" fill="none" stroke="#545454" stroke-width="1.9"><path d="M2 1.8c2.5 0 4 2 4 6.2"/></svg>
<div class="t" style="left:3px;top:418px">Painting Mode</div>
<div class="a" style="left:124px;top:422px;width:12px;height:8px;background:#545454"></div>
<svg class="a" style="left:128px;top:415px" width="8" height="8" fill="none" stroke="#545454" stroke-width="1.9"><path d="M2 1.8c2.5 0 4 2 4 6.2"/></svg>
<div class="a" style="left:0;top:432px;width:137px;height:18px;background:#373737"></div>
<div class="a" style="left:5px;top:437px;border-left:4.5px solid transparent;border-right:4.5px solid transparent;border-top:8px solid #eee"></div>
<div class="t" style="left:0;width:137px;text-align:center;top:435px;padding-left:1px">Texture</div>
<div class="a" style="left:3px;top:453px;width:12px;height:12px;border:1px solid #909090;border-radius:1px"></div>
<div class="t" style="left:18px;top:454px">Pattern</div>
<div class="a" style="left:124px;top:458px;width:12px;height:8px;background:#545454"></div>
<svg class="a" style="left:128px;top:451px" width="8" height="8" fill="none" stroke="#545454" stroke-width="1.9"><path d="M2 1.8c2.5 0 4 2 4 6.2"/></svg>
<div class="a" style="left:3px;top:471px;width:12px;height:12px;border:1px solid #909090;border-radius:1px"></div>
<svg class="a" style="left:3px;top:471px" width="12" height="12" fill="none" stroke="#e8e8e8" stroke-width="1.2"><path d="M3 6l2 3 4-7"/></svg>
<div class="t" style="left:18px;top:472px">Strength</div>
<div class="a" style="left:124px;top:476px;width:12px;height:8px;background:#545454"></div>
<svg class="a" style="left:128px;top:469px" width="8" height="8" fill="none" stroke="#545454" stroke-width="1.9"><path d="M2 1.8c2.5 0 4 2 4 6.2"/></svg>
</div>
<div class="a" style="left:465px;top:212px;width:11px;height:479px;background:#3c3c3c;border-left:1.5px solid #808080"></div>
<div class="a" style="left:467px;top:212px;width:9px;height:11px;background:#3a3a3a;border-bottom:1.5px solid #808080"></div>
<div class="a" style="left:468px;top:215px;border-left:3.5px solid transparent;border-right:3.5px solid transparent;border-bottom:3.5px solid #bbb"></div>
<div class="a" style="left:467px;top:224px;width:9px;height:336px;background:#444;border-bottom:1px solid #555"></div>
<div class="a" style="left:467px;top:680px;width:9px;height:11px;background:#3a3a3a;border-top:1.5px solid #808080"></div>
<div class="a" style="left:468px;top:684px;border-left:3.5px solid transparent;border-right:3.5px solid transparent;border-top:3.5px solid #bbb"></div>
<div class="a" style="left:483px;top:212px;width:154px;height:24px;border:1px solid #3c3c3c;border-top-color:#555;border-radius:3px;background:#4a4a4a"></div>
<div class="a" style="left:484px;top:213px;width:38px;height:22px;background:#526273"></div>
<div class="a" style="left:601px;top:213px;width:1px;height:22px;background:#3c3c3c"></div>
<div class="a" style="left:522px;top:213px;width:1px;height:22px;background:#3c3c3c"></div>
<div class="t" style="left:488px;top:218px">A&#818;uto</div>
<div class="t" style="left:529px;top:218px">P&#818;redefined</div>
<div class="t" style="left:606px;top:218px">T&#818;ext</div>
<div class="a" style="left:483px;top:241px;width:491px;height:421px;border:1px solid #3e3e3e;border-radius:2px"></div>
<div class="a" style="left:490px;top:250px;width:86px;height:85px;border:1px solid #3a3a3a;border-radius:2px;background:#4a4a4a"></div>
<div class="a" style="left:517px;top:277px;width:31px;height:31px;border-radius:50%;background:#000"></div>
<div class="t" style="left:490px;top:345px">Mask Type:</div>
<div class="a" style="left:490px;top:367px;width:86px;height:22px;border:1px solid #3a3a3a;border-radius:2px;background:#4a4a4a"></div>
<div class="t" style="left:494px;top:372px">Default</div>
<div class="a" style="left:563px;top:377px;border-left:3.5px solid transparent;border-right:3.5px solid transparent;border-top:3.5px solid #bbb"></div>
<div class="t" style="left:490px;top:400px">Shape:</div>
<div class="a" style="left:490px;top:422px;width:86px;height:22px;border:1px solid #3a3a3a;border-radius:2px;background:#4a4a4a"></div>
<div class="t" style="left:494px;top:427px">Circle</div>
<div class="a" style="left:563px;top:432px;border-left:3.5px solid transparent;border-right:3.5px solid transparent;border-top:3.5px solid #bbb"></div>
<div class="a" style="left:490px;top:458px;width:11px;height:11px;background:#3e3e3e;border-radius:1px"></div>
<svg class="a" style="left:490px;top:458px" width="11" height="11" fill="none" stroke="#e8e8e8" stroke-width="1.2"><path d="M2.5 5.5l2 3 4-7"/></svg>
<div class="t" style="left:504px;top:457px">An&#818;ti-alias</div>
<div class="t" style="left:460px;width:200px;text-align:right;top:256px">Diameter:</div>
<div class="a" style="left:665px;top:250px;width:301px;height:24px;background:#333;border:1px solid #3a3a3a;border-radius:2px"></div>
<div class="a" style="left:666px;top:251px;width:99px;height:22px;background:#52708f"></div>
<div class="t" style="left:665px;width:289px;text-align:center;top:256px;color:#e8e8e8">40,00 px</div>
<div class="a" style="left:954px;top:251px;width:11px;height:22px;background:#3c3c3c;border-left:1px solid #2e2e2e"></div>
<svg class="a" style="left:954px;top:250px" width="12" height="24" fill="#999"><path d="M2.5 10.0l3-3.5 3 3.5zM2.5 14.0l3 3.5 3-3.5z"/></svg>
<div class="t" style="left:460px;width:200px;text-align:right;top:286px">Ratio:</div>
<div class="a" style="left:665px;top:280px;width:301px;height:23px;background:#333;border:1px solid #3a3a3a;border-radius:2px"></div>
<div class="a" style="left:666px;top:281px;width:288px;height:21px;background:#52708f"></div>
<div class="t" style="left:665px;width:289px;text-align:center;top:285px;color:#e8e8e8">1,00</div>
<div class="a" style="left:954px;top:281px;width:11px;height:21px;background:#3c3c3c;border-left:1px solid #2e2e2e"></div>
<svg class="a" style="left:954px;top:280px" width="12" height="23" fill="#999"><path d="M2.5 9.5l3-3.5 3 3.5zM2.5 13.5l3 3.5 3-3.5z"/></svg>
<div class="t" style="left:588px;top:320px">Fade</div>
<div class="a" style="left:588px;top:337px;width:371px;height:73px;border:1px solid #3e3e3e;border-radius:2px"></div>
<div class="t" style="left:458px;width:200px;text-align:right;top:353px">Horizontal:</div>
<div class="a" style="left:663px;top:347px;width:267px;height:23px;background:#333;border:1px solid #3a3a3a;border-radius:2px"></div>
<div class="a" style="left:664px;top:348px;width:254px;height:21px;background:#52708f"></div>
<div class="t" style="left:663px;width:255px;text-align:center;top:352px;color:#e8e8e8">1,00</div>
<div class="a" style="left:918px;top:348px;width:11px;height:21px;background:#3c3c3c;border-left:1px solid #2e2e2e"></div>
<svg class="a" style="left:918px;top:347px" width="12" height="23" fill="#999"><path d="M2.5 9.5l3-3.5 3 3.5zM2.5 13.5l3 3.5 3-3.5z"/></svg>
<div class="t" style="left:458px;width:200px;text-align:right;top:382px">Vertical:</div>
<div class="a" style="left:663px;top:377px;width:267px;height:23px;background:#333;border:1px solid #3a3a3a;border-radius:2px"></div>
<div class="a" style="left:664px;top:378px;width:254px;height:21px;background:#52708f"></div>
<div class="t" style="left:663px;width:255px;text-align:center;top:382px;color:#e8e8e8">1,00</div>
<div class="a" style="left:918px;top:378px;width:11px;height:21px;background:#3c3c3c;border-left:1px solid #2e2e2e"></div>
<svg class="a" style="left:918px;top:377px" width="12" height="23" fill="#999"><path d="M2.5 9.5l3-3.5 3 3.5zM2.5 13.5l3 3.5 3-3.5z"/></svg>
<svg class="a" style="left:936px;top:365px" width="12" height="16" fill="none" stroke="#e8e8e8" stroke-width="1.3"><rect x="2.5" y="1.5" width="6" height="6" rx="2"/><rect x="2.5" y="8.5" width="6" height="6" rx="2"/></svg>
<div class="t" style="left:460px;width:200px;text-align:right;top:428px">Angle:</div>
<div class="a" style="left:667px;top:423px;width:22px;height:22px;border-radius:50%;background:#2e2e2e"></div>
<svg class="a" style="left:666px;top:422px" width="24" height="24"><path d="M11.5 11.5h9.5" stroke="#e8e8e8" stroke-width="1.2"/><circle cx="11.5" cy="11.5" r="1.4" fill="#f0f0f0"/><circle cx="21.5" cy="11.5" r="1.4" fill="#f0f0f0"/></svg>
<div class="a" style="left:694px;top:423px;width:64px;height:22px;background:#333;border:1px solid #3a3a3a;border-radius:2px"></div>
<div class="t" style="left:694px;width:49px;text-align:right;top:428px;color:#e8e8e8">0<span style="font-size:9px;vertical-align:4px">°</span></div>
<div class="a" style="left:746px;top:424px;width:11px;height:20px;background:#3c3c3c"></div>
<svg class="a" style="left:746px;top:423px" width="12" height="22" fill="#999"><path d="M2.5 9l3-3.5 3 3.5zM2.5 13l3 3.5 3-3.5z"/></svg>
<svg class="a" style="left:766px;top:425.5px" width="15" height="15" fill="none" stroke="#e8e8e8" stroke-width="1.1"><circle cx="7.25" cy="7.5" r="6.8" stroke="#bbb" stroke-width="1"/><path d="M3.5 3L7 7.5 10.5 3"/><circle cx="3.5" cy="3" r="1.4" fill="#f0f0f0" stroke="none"/><circle cx="7" cy="7.5" r="1.4" fill="#f0f0f0" stroke="none"/><circle cx="10.5" cy="3" r="1.4" fill="#f0f0f0" stroke="none"/></svg>
<svg class="a" style="left:789px;top:425.5px" width="15" height="15" fill="none" stroke="#e8e8e8" stroke-width="1.1"><circle cx="7.25" cy="7.5" r="6.8" stroke="#bbb" stroke-width="1"/><path d="M10.5 3L6.5 7.5 10.5 12"/><circle cx="10.5" cy="3" r="1.4" fill="#f0f0f0" stroke="none"/><circle cx="6.5" cy="7.5" r="1.4" fill="#f0f0f0" stroke="none"/><circle cx="10.5" cy="12" r="1.4" fill="#f0f0f0" stroke="none"/></svg>
<svg class="a" style="left:811.5px;top:425.5px" width="15" height="15" fill="none" stroke="#e8e8e8" stroke-width="1.1"><circle cx="7.25" cy="7.5" r="6.8" stroke="#bbb" stroke-width="1"/><path d="M3 12L11.5 3"/><circle cx="3" cy="12" r="1.4" fill="#f0f0f0" stroke="none"/><circle cx="7.25" cy="7.5" r="1.4" fill="#f0f0f0" stroke="none"/><circle cx="11.5" cy="3" r="1.4" fill="#f0f0f0" stroke="none"/></svg>
<div class="t" style="left:460px;width:200px;text-align:right;top:457px">Spikes:</div>
<div class="a" style="left:665px;top:452px;width:301px;height:23px;background:#333;border:1px solid #3a3a3a;border-radius:2px"></div>
<div class="t" style="left:665px;width:289px;text-align:center;top:457px;color:#e8e8e8">2</div>
<div class="a" style="left:954px;top:453px;width:11px;height:21px;background:#3c3c3c;border-left:1px solid #2e2e2e"></div>
<svg class="a" style="left:954px;top:452px" width="12" height="23" fill="#999"><path d="M2.5 9.5l3-3.5 3 3.5zM2.5 13.5l3 3.5 3-3.5z"/></svg>
<div class="t" style="left:460px;width:200px;text-align:right;top:487px">Randomness:</div>
<div class="a" style="left:665px;top:482px;width:301px;height:23px;background:#333;border:1px solid #3a3a3a;border-radius:2px"></div>
<div class="t" style="left:665px;width:289px;text-align:center;top:487px;color:#e8e8e8">0</div>
<div class="a" style="left:954px;top:483px;width:11px;height:21px;background:#3c3c3c;border-left:1px solid #2e2e2e"></div>
<svg class="a" style="left:954px;top:482px" width="12" height="23" fill="#999"><path d="M2.5 9.5l3-3.5 3 3.5zM2.5 13.5l3 3.5 3-3.5z"/></svg>
<div class="t" style="left:460px;width:200px;text-align:right;top:517px">Density:</div>
<div class="a" style="left:665px;top:511px;width:301px;height:23px;background:#333;border:1px solid #3a3a3a;border-radius:2px"></div>
<div class="a" style="left:666px;top:512px;width:288px;height:21px;background:#52708f"></div>
<div class="t" style="left:665px;width:289px;text-align:center;top:516px;color:#e8e8e8">100%</div>
<div class="a" style="left:954px;top:512px;width:11px;height:21px;background:#3c3c3c;border-left:1px solid #2e2e2e"></div>
<svg class="a" style="left:954px;top:511px" width="12" height="23" fill="#999"><path d="M2.5 9.5l3-3.5 3 3.5zM2.5 13.5l3 3.5 3-3.5z"/></svg>
<div class="t" style="left:460px;width:200px;text-align:right;top:546px">Spacing:</div>
<div class="a" style="left:666px;top:547px;width:11px;height:11px;background:#3e3e3e;border-radius:1px"></div>
<svg class="a" style="left:666px;top:547px" width="11" height="11" fill="none" stroke="#e8e8e8" stroke-width="1.2"><path d="M2.5 5.5l2 3 4-7"/></svg>
<div class="t" style="left:680px;top:546px">Au&#818;to</div>
<div class="a" style="left:718px;top:541px;width:248px;height:23px;background:#333;border:1px solid #3a3a3a;border-radius:2px"></div>
<div class="a" style="left:719px;top:542px;width:101px;height:21px;background:#52708f"></div>
<div class="t" style="left:823px;top:546px;color:#e8e8e8">0,80</div>
<div class="a" style="left:954px;top:542px;width:11px;height:21px;background:#3c3c3c;border-left:1px solid #2e2e2e"></div>
<svg class="a" style="left:954px;top:541px" width="12" height="23" fill="#999"><path d="M2.5 9.5l3-3.5 3 3.5zM2.5 13.5l3 3.5 3-3.5z"/></svg>
<div class="a" style="left:482px;top:673px;width:11px;height:11px;background:#3e3e3e;border-radius:1px"></div>
<svg class="a" style="left:482px;top:673px" width="11" height="11" fill="none" stroke="#e8e8e8" stroke-width="1.2"><path d="M2.5 5.5l2 3 4-7"/></svg>
<div class="t" style="left:497px;top:673px">Auto</div>
<div class="t" style="left:535px;top:673px;color:#8a8a8a">Precision:</div>
<div class="a" style="left:597px;top:668px;width:377px;height:23px;background:#454545;border:1px solid #3a3a3a;border-radius:2px"></div>
<div class="t" style="left:597px;width:364px;text-align:center;top:673px;color:#888">5</div>
<svg class="a" style="left:961px;top:668px" width="12" height="23" fill="#666"><path d="M2.5 9.5l3-3.5 3 3.5zM2.5 13.5l3 3.5 3-3.5z"/></svg>
<div class="a" style="left:317px;top:720px;width:11px;height:11px;background:#3e3e3e;border-radius:1px"></div>
<div class="t" style="left:332px;top:719px">E&#818;raser switch size</div>
<div class="a" style="left:444px;top:720px;width:11px;height:11px;background:#3e3e3e;border-radius:1px"></div>
<div class="t" style="left:459px;top:719px">Er&#818;aser switch opacity</div>
<div class="a" style="left:592px;top:720px;width:11px;height:11px;background:#3e3e3e;border-radius:1px"></div>
<svg class="a" style="left:592px;top:720px" width="11" height="11" fill="none" stroke="#e8e8e8" stroke-width="1.2"><path d="M2.5 5.5l2 3 4-7"/></svg>
<div class="t" style="left:607px;top:719px">Tem&#818;porarily Save Tweaks To Presets</div>
<div class="a" style="left:865px;top:720px;width:11px;height:11px;background:#3e3e3e;border-radius:1px"></div>
<svg class="a" style="left:865px;top:720px" width="11" height="11" fill="none" stroke="#e8e8e8" stroke-width="1.2"><path d="M2.5 5.5l2 3 4-7"/></svg>
<div class="t" style="left:879px;top:719px;text-decoration:line-through">I&#818;nstant Preview</div>
<div class="a" style="left:985px;top:716px;width:30px;height:18px;border:1px solid #3a3a3a;border-radius:2px;background:#4a4a4a"></div>
<svg class="a" style="left:985px;top:716px" width="30" height="18" fill="none" stroke="#e8e8e8" stroke-width="1.5"><path d="M9 5h10M9 9h10M9 13h10"/><path d="M22 8l2 2 2-2z" fill="#aaa" stroke="none"/></svg>
<div class="a" style="left:1035px;top:202px;width:18px;height:18px;border:1px solid #3d3d3d;border-radius:2px;background:#434343"></div>
<svg class="a" style="left:1035px;top:202px" width="18" height="18" fill="none" stroke="#e0e0e0" stroke-width="1.4"><path d="M11 5l-3.5 4L11 13"/></svg>
<div class="t" style="left:1058px;top:204px">Scratchpad</div>
<div class="a" style="left:1035px;top:223px;width:196px;height:502px;background:#fff"></div>
<div class="a" style="left:1054px;top:242px;width:158px;height:158px;border:1px dotted #c8c8c8"></div>
<svg class="a" style="left:1049px;top:729px" width="170" height="18"><path d="M2.5 15c0-3.5 1.5-6 5-6.5l1.8 1.8c-.5 3.5-3 4.7-6.8 4.7z" fill="#e4e4e4"/><path d="M8.7 8.2l1.8 1.8" stroke="#e4e4e4" stroke-width="1.2"/><ellipse cx="12.7" cy="4.5" rx="2.3" ry="4" transform="rotate(45 12.7 4.5)" fill="#e4e4e4"/><rect x="52.5" y="2.5" width="12" height="12" fill="url(#g2)" stroke="#ddd"/><path d="M103 3l2 2-3 3 6 6 5-5-5-5z" fill="#e8e8e8"/><path d="M104 8h7l-3-3z" fill="#333"/><path d="M114 11c1 1 1.5 2.5 1 3.5" stroke="#e8e8e8" fill="none" stroke-width="1.6"/><path d="M153 4.5h10M156 4.5V3h4v1.5M154 6.5h8v8h-8z" fill="#e8e8e8" stroke="#e8e8e8" stroke-width="1"/><defs><linearGradient id="g2"><stop offset="0" stop-color="#222"/><stop offset="1" stop-color="#fff"/></linearGradient></defs></svg>
<!-- dock -->
<div class="a" style="left:1300px;top:80px;width:132px;height:24px;background:#474747;border:1px solid #5a5a5a;border-bottom:none;border-radius:3px 3px 0 0"></div>
<div class="t" style="left:1308px;top:86px;font-size:11.2px">Advanced Color Sele...</div>
<div class="a" style="left:1433px;top:82px;width:70px;height:21px;background:#3f3f3f;border:1px solid #525252;border-bottom:none;border-radius:3px 3px 0 0"></div>
<div class="t" style="left:1441px;top:86px;font-size:11.4px">Tool Opt...</div>
<div class="a" style="left:1297px;top:103px;width:207px;height:1px;background:#555"></div>
<div class="a" style="left:1301px;top:103px;width:130px;height:1px;background:#474747"></div>
<svg class="a" style="left:1302px;top:106px" width="14" height="14" fill="none" stroke="#d8d8d8" stroke-width="1"><circle cx="7" cy="7" r="6.3"/><rect x="4" y="6.5" width="6" height="4" fill="#d8d8d8" stroke="none"/><path d="M5 6.5V5a2 2 0 0 1 4 0"/></svg>
<div class="t" style="left:1319px;top:107px;font-size:11.2px">Advanced Color Selector</div>
<svg class="a" style="left:1470px;top:107px" width="30" height="13" fill="none" stroke="#e0e0e0" stroke-width="1.1"><rect x="1.5" y="5.5" width="6" height="6"/><path d="M4.5 5.5v-3h6v6h-3"/><path d="M20.5 1.5l9 9M29.5 1.5l-9 9" stroke-width="1.4"/></svg>
<svg class="a" style="left:1305px;top:127px" width="14" height="14" fill="none" stroke="#e0e0e0" stroke-width="1.2"><rect x="1" y="1" width="12" height="12"/><path d="M1 3.5h12M4 6v5M6 6.5h5M6 9h5M6 11h5"/></svg>
<div class="a" style="left:1346px;top:121px;width:95px;height:95px;border-radius:50%;background:conic-gradient(from 270deg,#f00,#ff0,#0f0,#0ff,#00f,#f0f,#f00);-webkit-mask:radial-gradient(circle,transparent 38.5px,#000 39.5px,#000 47px,transparent 47.5px)"></div>
<svg class="a" style="left:1346px;top:121px" width="95" height="95"><defs><linearGradient id="tw" x1="0" y1="1" x2="1" y2="1"><stop offset="0" stop-color="#fff"/><stop offset="1" stop-color="#f00"/></linearGradient><linearGradient id="tb" x1="0" y1="0" x2="0" y2="1"><stop offset="0" stop-color="#000"/><stop offset="1" stop-color="#000" stop-opacity="0"/></linearGradient></defs><path d="M48 9L15 67h66z" fill="url(#tw)"/><path d="M48 9L15 67h66z" fill="url(#tb)"/><circle cx="37" cy="24" r="3.5" fill="none" stroke="#ddd" stroke-width="1.2"/><path d="M1 46h6" stroke="#fff" stroke-width="1.2"/></svg>
<div class="a" style="left:1299px;top:226px;width:189px;height:7px;background:linear-gradient(90deg,#000 0,#000 25%,#2a2a2a 50%,#3a2e2e 52%,#d07070 100%)"></div>
<div class="a" style="left:1299px;top:234px;width:189px;height:8px;background:linear-gradient(90deg,#000 0,#000 25%,#333 50%,#555 52%,#e0e0e0 100%)"></div>
<div class="a" style="left:1391px;top:217px;width:6px;height:25px;background:#474747"></div>
<div class="a" style="left:1389.5px;top:217px;width:1.5px;height:25px;background:#a8a8a8"></div>
<div class="a" style="left:1397px;top:217px;width:1.5px;height:25px;background:#a8a8a8"></div>
<svg class="a" style="left:1299px;top:244px" width="14" height="14" fill="none" stroke="#e0e0e0" stroke-width="1.6"><path d="M2.5 8a5 5 0 0 1 8.5-4.5M11.5 6a5 5 0 0 1-8.5 4.5"/><path d="M11 1v3.5H7.5M3 13V9.5h3.5"/></svg>
<svg class="a" style="left:1490px;top:243px" width="12" height="12" fill="none" stroke="#e0e0e0" stroke-width="1.3"><circle cx="6" cy="6" r="4.6"/><path d="M3 3l6 6"/></svg>
<div class="a" style="left:1396px;top:259px;width:14px;height:2px;background-image:linear-gradient(90deg,#888 50%,transparent 50%);background-size:2px 2px"></div>
<svg class="a" style="left:1302px;top:265px" width="14" height="14" fill="none" stroke="#d8d8d8" stroke-width="1"><circle cx="7" cy="7" r="6.3"/><rect x="4" y="6.5" width="6" height="4" fill="#d8d8d8" stroke="none"/><path d="M5 6.5V5a2 2 0 0 1 4 0"/></svg>
<div class="t" style="left:1319px;top:266px;font-size:11.2px">Layers</div>
<svg class="a" style="left:1470px;top:266px" width="30" height="13" fill="none" stroke="#e0e0e0" stroke-width="1.1"><rect x="1.5" y="5.5" width="6" height="6"/><path d="M4.5 5.5v-3h6v6h-3"/><path d="M20.5 1.5l9 9M29.5 1.5l-9 9" stroke-width="1.4"/></svg>
<div class="a" style="left:1300px;top:281px;width:177px;height:23px;background:#4a4a4a;border:1px solid #3a3a3a;border-radius:3px"></div>
<div class="t" style="left:1303px;top:286px;font-size:11.5px">Normal</div>
<div class="a" style="left:1465px;top:291px;border-left:3.5px solid transparent;border-right:3.5px solid transparent;border-top:3.5px solid #bbb"></div>
<svg class="a" style="left:1483px;top:284px" width="20" height="20" fill="none" stroke="#e0e0e0" stroke-width="1.2"><path d="M1.5 1.5h12l-4.5 6v7l-3-1.5v-5.5z"/><path d="M15 16l2 2 2-2z" fill="#aaa" stroke="none"/></svg>
<div class="a" style="left:1300px;top:307px;width:177px;height:22px;background:#3c3c3c;border:1px solid #3a3a3a;border-radius:2px"></div>
<div class="a" style="left:1300px;top:307px;width:166px;height:22px;background:#52708f"></div>
<div class="t" style="left:1300px;width:166px;text-align:center;top:312px;font-size:11.3px;color:#eee">Opacity:&nbsp; 100%</div>
<svg class="a" style="left:1466px;top:307px" width="11" height="22" fill="#888"><path d="M2 9l3.5-3 3.5 3zM2 13l3.5 3 3.5-3z"/></svg>
<svg class="a" style="left:1485px;top:311px" width="19" height="18" fill="none" stroke="#e8e8e8" stroke-width="1.5"><path d="M1 3h10M1 7h10M1 11h10"/><path d="M13 14l2 2 2-2z" fill="#aaa" stroke="none"/></svg>
<div class="a" style="left:1300px;top:332px;width:204px;height:162px;background:#333;overflow:hidden">
<div class="a" style="left:18px;top:0px;width:174px;height:20px;background:#52708f"></div>
<div class="a" style="left:39px;top:0px;width:1px;height:20px;background:#5f7c98"></div>
<div class="a" style="left:60px;top:0px;width:1px;height:20px;background:#5f7c98"></div>
<div class="a" style="left:72px;top:0px;width:1px;height:20px;background:#5f7c98"></div>
<div class="a" style="left:146px;top:0px;width:1px;height:20px;background:#5f7c98"></div>
<div class="a" style="left:161px;top:0px;width:1px;height:20px;background:#5f7c98"></div>
<div class="a" style="left:176px;top:0px;width:1px;height:20px;background:#5f7c98"></div>
<svg class="a" style="left:2px;top:4px" width="14" height="12"><path d="M1 6c3-5 9-5 12 0-3 5-9 5-12 0z" fill="#e8e8e8"/><circle cx="7" cy="5.5" r="2.6" fill="#333"/><circle cx="7" cy="5" r="1.2" fill="#e8e8e8"/></svg>
<svg class="a" style="left:28px;top:5px" width="8" height="10" fill="none" stroke="#2e3e4e" stroke-width="1.2"><path d="M1 0v8h6"/></svg>
<div class="a" style="left:42px;top:3px;width:16px;height:15px;background-color:#f4f4f4;background-image:linear-gradient(45deg,#d8d8d8 25%,transparent 25%,transparent 75%,#d8d8d8 75%),linear-gradient(45deg,#d8d8d8 25%,transparent 25%,transparent 75%,#d8d8d8 75%);background-size:4px 4px;background-position:0 0,2px 2px;border:1px solid #2e4a66"></div>
<svg class="a" style="left:61px;top:2px" width="10" height="10" fill="none" stroke="#e0e0e0" stroke-width="1"><path d="M1.5 1.5h6v3l-3 3M1.5 1.5l4 4M5.5 3.5v2h-2"/></svg>
<div class="t" style="left:80px;top:5px;font-size:11px;font-weight:bold;color:#e4e4e4">plants_d...</div>
<div class="a" style="left:149px;top:9px;width:10px;height:7px;background:#7088a0"></div><div class="a" style="left:153px;top:4px;width:6px;height:6px;border:1.5px solid #7088a0;border-left:none;border-bottom:none;border-radius:0 4px 0 0"></div>
<div class="t" style="left:164px;top:2px;font-size:15px;font-style:italic;color:#7088a0">α</div>
<div class="a" style="left:178px;top:4px;width:13px;height:13px;background-image:linear-gradient(45deg,#8098b0 25%,transparent 25%,transparent 75%,#8098b0 75%),linear-gradient(45deg,#8098b0 25%,transparent 25%,transparent 75%,#8098b0 75%);background-size:6.5px 6.5px;background-position:0 0,3.25px 3.25px;background-color:#5a7590"></div>
<div class="a" style="left:18px;top:41px;width:174px;height:1px;background:#2e2e2e"></div>
<div class="a" style="left:39px;top:21px;width:1px;height:20px;background:#393939"></div>
<div class="a" style="left:60px;top:21px;width:1px;height:20px;background:#393939"></div>
<div class="a" style="left:72px;top:21px;width:1px;height:20px;background:#393939"></div>
<div class="a" style="left:146px;top:21px;width:1px;height:20px;background:#393939"></div>
<div class="a" style="left:161px;top:21px;width:1px;height:20px;background:#393939"></div>
<div class="a" style="left:176px;top:21px;width:1px;height:20px;background:#393939"></div>
<svg class="a" style="left:2px;top:25px" width="14" height="12"><path d="M1 6c3-5 9-5 12 0-3 5-9 5-12 0z" fill="#e8e8e8"/><circle cx="7" cy="5.5" r="2.6" fill="#333"/><circle cx="7" cy="5" r="1.2" fill="#e8e8e8"/></svg>
<svg class="a" style="left:28px;top:26px" width="8" height="10" fill="none" stroke="#4a4a4a" stroke-width="1.2"><path d="M1 0v8h6"/></svg>
<div class="a" style="left:42px;top:24px;width:17px;height:15px;background-color:#f4f4f4;background-image:linear-gradient(45deg,#d8d8d8 25%,transparent 25%,transparent 75%,#d8d8d8 75%),linear-gradient(45deg,#d8d8d8 25%,transparent 25%,transparent 75%,#d8d8d8 75%);background-size:4px 4px;background-position:0 0,2px 2px;border:1px solid #444"></div>
<div class="a" style="left:41px;top:24px;width:18px;height:15px;background:#333"></div><div class="a" style="left:41px;top:29px;width:18px;height:5px;background:#eee"></div>
<svg class="a" style="left:61px;top:23px" width="10" height="10" fill="none" stroke="#e0e0e0" stroke-width="1"><path d="M1.5 1.5h6v3l-3 3M1.5 1.5l4 4M5.5 3.5v2h-2"/></svg>
<div class="t" style="left:80px;top:26px;font-size:11px;font-weight:normal;color:#e4e4e4">plants_tr...</div>
<div class="a" style="left:149px;top:30px;width:10px;height:7px;background:#5e5e5e"></div><div class="a" style="left:153px;top:25px;width:6px;height:6px;border:1.5px solid #5e5e5e;border-left:none;border-bottom:none;border-radius:0 4px 0 0"></div>
<div class="t" style="left:164px;top:23px;font-size:15px;font-style:italic;color:#5e5e5e">α</div>
<div class="a" style="left:178px;top:25px;width:13px;height:13px;background-image:linear-gradient(45deg,#666 25%,transparent 25%,transparent 75%,#666 75%),linear-gradient(45deg,#666 25%,transparent 25%,transparent 75%,#666 75%);background-size:6.5px 6.5px;background-position:0 0,3.25px 3.25px;background-color:#4a4a4a"></div>
<div class="a" style="left:18px;top:62px;width:174px;height:1px;background:#2e2e2e"></div>
<div class="a" style="left:39px;top:42px;width:1px;height:20px;background:#393939"></div>
<div class="a" style="left:60px;top:42px;width:1px;height:20px;background:#393939"></div>
<div class="a" style="left:72px;top:42px;width:1px;height:20px;background:#393939"></div>
<div class="a" style="left:146px;top:42px;width:1px;height:20px;background:#393939"></div>
<div class="a" style="left:161px;top:42px;width:1px;height:20px;background:#393939"></div>
<div class="a" style="left:176px;top:42px;width:1px;height:20px;background:#393939"></div>
<svg class="a" style="left:2px;top:46px" width="14" height="12"><path d="M1 6c3-5 9-5 12 0-3 5-9 5-12 0z" fill="#e8e8e8"/><circle cx="7" cy="5.5" r="2.6" fill="#333"/><circle cx="7" cy="5" r="1.2" fill="#e8e8e8"/></svg>
<svg class="a" style="left:28px;top:47px" width="8" height="10" fill="none" stroke="#4a4a4a" stroke-width="1.2"><path d="M1 0v8h6"/></svg>
<div class="a" style="left:44px;top:45px;width:13px;height:15px;background-color:#f4f4f4;background-image:linear-gradient(45deg,#d8d8d8 25%,transparent 25%,transparent 75%,#d8d8d8 75%),linear-gradient(45deg,#d8d8d8 25%,transparent 25%,transparent 75%,#d8d8d8 75%);background-size:4px 4px;background-position:0 0,2px 2px;border:1px solid #444"></div>
<div class="a" style="left:46px;top:50px;width:6px;height:4px;background:#4a8a3a;transform:rotate(-40deg)"></div>
<svg class="a" style="left:61px;top:44px" width="10" height="10" fill="none" stroke="#e0e0e0" stroke-width="1"><path d="M1.5 1.5h6v3l-3 3M1.5 1.5l4 4M5.5 3.5v2h-2"/></svg>
<div class="t" style="left:80px;top:47px;font-size:11px;font-weight:normal;color:#e4e4e4">plants_p...</div>
<div class="a" style="left:149px;top:51px;width:10px;height:7px;background:#5e5e5e"></div><div class="a" style="left:153px;top:46px;width:6px;height:6px;border:1.5px solid #5e5e5e;border-left:none;border-bottom:none;border-radius:0 4px 0 0"></div>
<div class="t" style="left:164px;top:44px;font-size:15px;font-style:italic;color:#5e5e5e">α</div>
<div class="a" style="left:178px;top:46px;width:13px;height:13px;background:#f0f0f0"></div><div class="a" style="left:181px;top:50px;width:7px;height:7px;background:#111"></div><div class="a" style="left:182.5px;top:47px;width:4px;height:4px;border:1.5px solid #111;border-bottom:none"></div>
<div class="a" style="left:18px;top:83px;width:174px;height:1px;background:#2e2e2e"></div>
<div class="a" style="left:39px;top:63px;width:1px;height:20px;background:#393939"></div>
<div class="a" style="left:60px;top:63px;width:1px;height:20px;background:#393939"></div>
<div class="a" style="left:72px;top:63px;width:1px;height:20px;background:#393939"></div>
<div class="a" style="left:146px;top:63px;width:1px;height:20px;background:#393939"></div>
<div class="a" style="left:161px;top:63px;width:1px;height:20px;background:#393939"></div>
<div class="a" style="left:176px;top:63px;width:1px;height:20px;background:#393939"></div>
<svg class="a" style="left:2px;top:67px" width="14" height="12"><path d="M1 6c3-5 9-5 12 0-3 5-9 5-12 0z" fill="#e8e8e8"/><circle cx="7" cy="5.5" r="2.6" fill="#333"/><circle cx="7" cy="5" r="1.2" fill="#e8e8e8"/></svg>
<svg class="a" style="left:28px;top:68px" width="8" height="10" fill="none" stroke="#4a4a4a" stroke-width="1.2"><path d="M1 0v8h6"/></svg>
<div class="a" style="left:46px;top:66px;width:9px;height:15px;background-color:#f4f4f4;background-image:linear-gradient(45deg,#d8d8d8 25%,transparent 25%,transparent 75%,#d8d8d8 75%),linear-gradient(45deg,#d8d8d8 25%,transparent 25%,transparent 75%,#d8d8d8 75%);background-size:4px 4px;background-position:0 0,2px 2px;border:1px solid #444"></div>
<svg class="a" style="left:61px;top:65px" width="10" height="10" fill="none" stroke="#e0e0e0" stroke-width="1"><path d="M1.5 1.5h6v3l-3 3M1.5 1.5l4 4M5.5 3.5v2h-2"/></svg>
<div class="t" style="left:80px;top:68px;font-size:11px;font-weight:normal;color:#e4e4e4">plants_p...</div>
<div class="a" style="left:149px;top:72px;width:10px;height:7px;background:#5e5e5e"></div><div class="a" style="left:153px;top:67px;width:6px;height:6px;border:1.5px solid #5e5e5e;border-left:none;border-bottom:none;border-radius:0 4px 0 0"></div>
<div class="t" style="left:164px;top:65px;font-size:15px;font-style:italic;color:#5e5e5e">α</div>
<div class="a" style="left:178px;top:67px;width:13px;height:13px;background:#f0f0f0"></div><div class="a" style="left:181px;top:71px;width:7px;height:7px;background:#111"></div><div class="a" style="left:182.5px;top:68px;width:4px;height:4px;border:1.5px solid #111;border-bottom:none"></div>
<div class="a" style="left:18px;top:104px;width:174px;height:1px;background:#2e2e2e"></div>
<div class="a" style="left:39px;top:84px;width:1px;height:20px;background:#393939"></div>
<div class="a" style="left:60px;top:84px;width:1px;height:20px;background:#393939"></div>
<div class="a" style="left:72px;top:84px;width:1px;height:20px;background:#393939"></div>
<div class="a" style="left:146px;top:84px;width:1px;height:20px;background:#393939"></div>
<div class="a" style="left:161px;top:84px;width:1px;height:20px;background:#393939"></div>
<div class="a" style="left:176px;top:84px;width:1px;height:20px;background:#393939"></div>
<svg class="a" style="left:2px;top:88px" width="14" height="12"><path d="M1 6c3-5 9-5 12 0-3 5-9 5-12 0z" fill="#e8e8e8"/><circle cx="7" cy="5.5" r="2.6" fill="#333"/><circle cx="7" cy="5" r="1.2" fill="#e8e8e8"/></svg>
<svg class="a" style="left:28px;top:89px" width="8" height="10" fill="none" stroke="#4a4a4a" stroke-width="1.2"><path d="M1 0v8h6"/></svg>
<div class="a" style="left:43px;top:87px;width:14px;height:15px;background-color:#f4f4f4;background-image:linear-gradient(45deg,#d8d8d8 25%,transparent 25%,transparent 75%,#d8d8d8 75%),linear-gradient(45deg,#d8d8d8 25%,transparent 25%,transparent 75%,#d8d8d8 75%);background-size:4px 4px;background-position:0 0,2px 2px;border:1px solid #444"></div>
<div class="a" style="left:45px;top:90px;width:4px;height:3px;background:#111;border-radius:50%"></div>
<svg class="a" style="left:61px;top:86px" width="10" height="10" fill="none" stroke="#e0e0e0" stroke-width="1"><path d="M1.5 1.5h6v3l-3 3M1.5 1.5l4 4M5.5 3.5v2h-2"/></svg>
<div class="t" style="left:80px;top:89px;font-size:11px;font-weight:normal;color:#e4e4e4">plants_p...</div>
<div class="a" style="left:149px;top:93px;width:10px;height:7px;background:#5e5e5e"></div><div class="a" style="left:153px;top:88px;width:6px;height:6px;border:1.5px solid #5e5e5e;border-left:none;border-bottom:none;border-radius:0 4px 0 0"></div>
<div class="t" style="left:164px;top:86px;font-size:15px;font-style:italic;color:#5e5e5e">α</div>
<div class="a" style="left:178px;top:88px;width:13px;height:13px;background:#f0f0f0"></div><div class="a" style="left:181px;top:92px;width:7px;height:7px;background:#111"></div><div class="a" style="left:182.5px;top:89px;width:4px;height:4px;border:1.5px solid #111;border-bottom:none"></div>
<div class="a" style="left:18px;top:125px;width:174px;height:1px;background:#2e2e2e"></div>
<div class="a" style="left:39px;top:105px;width:1px;height:20px;background:#393939"></div>
<div class="a" style="left:60px;top:105px;width:1px;height:20px;background:#393939"></div>
<div class="a" style="left:72px;top:105px;width:1px;height:20px;background:#393939"></div>
<div class="a" style="left:146px;top:105px;width:1px;height:20px;background:#393939"></div>
<div class="a" style="left:161px;top:105px;width:1px;height:20px;background:#393939"></div>
<div class="a" style="left:176px;top:105px;width:1px;height:20px;background:#393939"></div>
<svg class="a" style="left:2px;top:109px" width="14" height="12"><path d="M1 6c3-5 9-5 12 0-3 5-9 5-12 0z" fill="#e8e8e8"/><circle cx="7" cy="5.5" r="2.6" fill="#333"/><circle cx="7" cy="5" r="1.2" fill="#e8e8e8"/></svg>
<svg class="a" style="left:28px;top:110px" width="8" height="10" fill="none" stroke="#4a4a4a" stroke-width="1.2"><path d="M1 0v8h6"/></svg>
<div class="a" style="left:45px;top:108px;width:10px;height:15px;background-color:#f4f4f4;background-image:linear-gradient(45deg,#d8d8d8 25%,transparent 25%,transparent 75%,#d8d8d8 75%),linear-gradient(45deg,#d8d8d8 25%,transparent 25%,transparent 75%,#d8d8d8 75%);background-size:4px 4px;background-position:0 0,2px 2px;border:1px solid #444"></div>
<div class="a" style="left:47px;top:110px;width:2px;height:3px;background:#222"></div><div class="a" style="left:51px;top:115px;width:2px;height:4px;background:#2a4a2a"></div><div class="a" style="left:46px;top:118px;width:3px;height:3px;background:#1a2a1a"></div>
<svg class="a" style="left:61px;top:107px" width="10" height="10" fill="none" stroke="#e0e0e0" stroke-width="1"><path d="M1.5 1.5h6v3l-3 3M1.5 1.5l4 4M5.5 3.5v2h-2"/></svg>
<div class="t" style="left:80px;top:110px;font-size:11px;font-weight:normal;color:#e4e4e4">plants_b...</div>
<div class="a" style="left:149px;top:114px;width:10px;height:7px;background:#5e5e5e"></div><div class="a" style="left:153px;top:109px;width:6px;height:6px;border:1.5px solid #5e5e5e;border-left:none;border-bottom:none;border-radius:0 4px 0 0"></div>
<div class="t" style="left:164px;top:107px;font-size:15px;font-style:italic;color:#5e5e5e">α</div>
<div class="a" style="left:178px;top:109px;width:13px;height:13px;background:#f0f0f0"></div><div class="a" style="left:181px;top:113px;width:7px;height:7px;background:#111"></div><div class="a" style="left:182.5px;top:110px;width:4px;height:4px;border:1.5px solid #111;border-bottom:none"></div>
<div class="a" style="left:18px;top:146px;width:174px;height:1px;background:#2e2e2e"></div>
<div class="a" style="left:39px;top:126px;width:1px;height:20px;background:#393939"></div>
<div class="a" style="left:60px;top:126px;width:1px;height:20px;background:#393939"></div>
<div class="a" style="left:72px;top:126px;width:1px;height:20px;background:#393939"></div>
<div class="a" style="left:146px;top:126px;width:1px;height:20px;background:#393939"></div>
<div class="a" style="left:161px;top:126px;width:1px;height:20px;background:#393939"></div>
<div class="a" style="left:176px;top:126px;width:1px;height:20px;background:#393939"></div>
<svg class="a" style="left:2px;top:130px" width="14" height="12"><path d="M1 6c3-5 9-5 12 0-3 5-9 5-12 0z" fill="#e8e8e8"/><circle cx="7" cy="5.5" r="2.6" fill="#333"/><circle cx="7" cy="5" r="1.2" fill="#e8e8e8"/></svg>
<svg class="a" style="left:28px;top:131px" width="8" height="10" fill="none" stroke="#4a4a4a" stroke-width="1.2"><path d="M1 0v8h6"/></svg>
<div class="a" style="left:44px;top:129px;width:12px;height:15px;background-color:#f4f4f4;background-image:linear-gradient(45deg,#d8d8d8 25%,transparent 25%,transparent 75%,#d8d8d8 75%),linear-gradient(45deg,#d8d8d8 25%,transparent 25%,transparent 75%,#d8d8d8 75%);background-size:4px 4px;background-position:0 0,2px 2px;border:1px solid #444"></div>
<svg class="a" style="left:61px;top:128px" width="10" height="10" fill="none" stroke="#e0e0e0" stroke-width="1"><path d="M1.5 1.5h6v3l-3 3M1.5 1.5l4 4M5.5 3.5v2h-2"/></svg>
<div class="t" style="left:80px;top:131px;font-size:11px;font-weight:normal;color:#e4e4e4">plants_sh...</div>
<div class="a" style="left:149px;top:135px;width:10px;height:7px;background:#5e5e5e"></div><div class="a" style="left:153px;top:130px;width:6px;height:6px;border:1.5px solid #5e5e5e;border-left:none;border-bottom:none;border-radius:0 4px 0 0"></div>
<div class="t" style="left:164px;top:128px;font-size:15px;font-style:italic;color:#5e5e5e">α</div>
<div class="a" style="left:178px;top:130px;width:13px;height:13px;background-image:linear-gradient(45deg,#666 25%,transparent 25%,transparent 75%,#666 75%),linear-gradient(45deg,#666 25%,transparent 25%,transparent 75%,#666 75%);background-size:6.5px 6.5px;background-position:0 0,3.25px 3.25px;background-color:#4a4a4a"></div>
<svg class="a" style="left:2px;top:151px" width="14" height="12"><path d="M1 6c3-5 9-5 12 0-3 5-9 5-12 0z" fill="#e8e8e8"/><circle cx="7" cy="5.5" r="2.6" fill="#333"/><circle cx="7" cy="5" r="1.2" fill="#e8e8e8"/></svg>
<div class="a" style="left:22px;top:150px;width:12px;height:15px;background:#f0f0f0"></div>
<svg class="a" style="left:40px;top:148px" width="11" height="10" fill="none" stroke="#e0e0e0" stroke-width="1"><rect x="1.5" y="2.5" width="8" height="6"/><path d="M1.5 4.5h8M1.5 2.5h3v-1"/></svg>
<div class="t" style="left:59px;top:152px;font-size:11px">additional_ob...</div>
<div class="a" style="left:149px;top:156px;width:10px;height:7px;background:#5e5e5e"></div>
<div class="t" style="left:164px;top:149px;font-size:15px;font-style:italic;color:#5e5e5e">α</div>
<div class="a" style="left:178px;top:153px;width:13px;height:9px;background-image:repeating-linear-gradient(0deg,#666 0 2px,transparent 2px 4px)"></div>
</div>
<div class="a" style="left:1492px;top:332px;width:11px;height:162px;background:#3a3a3a"></div>
<div class="a" style="left:1492px;top:332px;width:11px;height:11px;background:#474747;border:1px solid #555"></div><div class="a" style="left:1494px;top:336px;border-left:3.5px solid transparent;border-right:3.5px solid transparent;border-bottom:3.5px solid #ccc"></div>
<div class="a" style="left:1493px;top:348px;width:9px;height:42px;background:#444;border:1px solid #555;display:none"></div>
<div class="a" style="left:1492px;top:483px;width:11px;height:11px;background:#474747;border:1px solid #555"></div><div class="a" style="left:1494px;top:487px;border-left:3.5px solid transparent;border-right:3.5px solid transparent;border-top:3.5px solid #ccc"></div>
<div class="a" style="left:1493px;top:368px;width:9px;height:37px;background:#3e3e3e;border:1px solid #4a4a4a"></div>
<svg class="a" style="left:1300px;top:497px" width="204" height="20" fill="none" stroke="#e8e8e8" stroke-width="1.5"><path d="M10.5 2v15M3 9.5h15"/><path d="M25 8l3 3 3-3z" fill="#999" stroke="none"/><rect x="42.5" y="2.5" width="11" height="11"/><path d="M39.5 5.5v11h11"/><path d="M63 6l8 8 8-8M88 14l8-8 8 8"/><path d="M113 5h16M113 9.5h16M113 14h16"/><path d="M123 3v4M117 7.5v4M124 12v4" stroke-width="2"/><path d="M184 4h14M189 4V2h4v2" /><path d="M185.5 6.5h11l-1 11h-9z" fill="#e8e8e8" stroke="none"/></svg>
<div class="a" style="left:1396px;top:520px;width:14px;height:2px;background-image:linear-gradient(90deg,#888 50%,transparent 50%);background-size:2px 2px"></div>
<div class="a" style="left:1297px;top:440px;width:2px;height:16px;background-image:linear-gradient(0deg,#888 50%,transparent 50%);background-size:2px 2px"></div>
<svg class="a" style="left:1302px;top:525px" width="14" height="14" fill="none" stroke="#d8d8d8" stroke-width="1"><circle cx="7" cy="7" r="6.3"/><rect x="4" y="6.5" width="6" height="4" fill="#d8d8d8" stroke="none"/><path d="M5 6.5V5a2 2 0 0 1 4 0"/></svg>
<div class="t" style="left:1319px;top:526px;font-size:11.2px">Brush Presets</div>
<svg class="a" style="left:1470px;top:526px" width="30" height="13" fill="none" stroke="#e0e0e0" stroke-width="1.1"><rect x="1.5" y="5.5" width="6" height="6"/><path d="M4.5 5.5v-3h6v6h-3"/><path d="M20.5 1.5l9 9M29.5 1.5l-9 9" stroke-width="1.4"/></svg>
<div class="a" style="left:1300px;top:541px;width:118px;height:23px;background:#4a4a4a;border:1px solid #3a3a3a;border-radius:3px"></div>
<div class="t" style="left:1303px;top:547px;font-size:11.5px">Paint</div>
<div class="a" style="left:1406px;top:551px;border-left:3.5px solid transparent;border-right:3.5px solid transparent;border-top:3.5px solid #bbb"></div>
<div class="a" style="left:1419px;top:543px;width:46px;height:19px;background:#474747;border:1px solid #3a3a3a;border-radius:2px"></div>
<svg class="a" style="left:1422px;top:545px" width="10" height="14" fill="none" stroke="#e0e0e0" stroke-width="1.3"><path d="M1.5 1h7v12l-3.5-3-3.5 3z"/></svg>
<div class="t" style="left:1435px;top:547px;font-size:11.5px">Tag</div>
<div class="a" style="left:1459px;top:557px;border-left:2.5px solid transparent;border-right:2.5px solid transparent;border-top:2.5px solid #aaa"></div>
<div class="a" style="left:1467px;top:543px;width:17px;height:19px;background:#474747;border:1px solid #3a3a3a;border-radius:2px"></div>
<svg class="a" style="left:1469px;top:547px" width="13" height="11" fill="none" stroke="#e8e8e8" stroke-width="1.4"><path d="M1 2h11M1 5.5h11M1 9h11"/></svg>
<svg class="a" style="left:1486px;top:545px" width="15" height="15" fill="none" stroke="#e0e0e0" stroke-width="1.1"><rect x="1.5" y="1.5" width="12" height="12"/><path d="M8 1.5v6"/></svg>
<!-- presets -->
<div class="a" style="left:1300px;top:566px;width:189px;height:227px;background:#1e1e1e;overflow:hidden">
<div class="a" style="left:1px;top:0px;width:45px;height:45px;background:linear-gradient(160deg,#dedede,#cacaca)"></div>
<svg class="a" style="left:1px;top:0px" width="45" height="45"><path d="M6 34c4-5 8 0 10 4s8 3 12-1 10-5 18-6" stroke="#6a6a6a" stroke-width="4" fill="none"/><path d="M47 -2L36 9" stroke="#e89a30" stroke-width="5"/><path d="M37 8L26 19" stroke="#c8c0d8" stroke-width="5"/><path d="M36 7L26 17" stroke="#fff" stroke-width="1.3"/><path d="M38 10L28 20" stroke="#7a6a90" stroke-width="1"/><path d="M25.5 18c-3.5 1.5-6.5 4.5-8.5 8.5 4-1 7-3.5 10-6.5z" fill="#4a2a20" stroke="#4a2a20" stroke-width="3"/></svg>
<div class="a" style="left:48px;top:0px;width:45px;height:45px;background:linear-gradient(160deg,#dedede,#cacaca)"></div>
<svg class="a" style="left:48px;top:0px" width="45" height="45"><path d="M8 36c4-6 8-4 10 0s6 4 10-2 8-6 16-6" stroke="#555" stroke-width="1.6" fill="none"/><path d="M47 -2L36 9" stroke="#e07a20" stroke-width="5"/><path d="M37 8L26 19" stroke="#c8c0d8" stroke-width="5"/><path d="M36 7L26 17" stroke="#fff" stroke-width="1.3"/><path d="M38 10L28 20" stroke="#7a6a90" stroke-width="1"/><path d="M25.5 18c-3.5 1.5-6.5 4.5-8.5 8.5 4-1 7-3.5 10-6.5z" fill="#3a1a18" stroke="#3a1a18" stroke-width="3"/></svg>
<div class="a" style="left:95px;top:0px;width:45px;height:45px;background:linear-gradient(160deg,#dedede,#cacaca)"></div>
<svg class="a" style="left:95px;top:0px" width="45" height="45"><path d="M10 30c0 6 6 8 14 6s12 2 16 4l6-2" stroke="#111" stroke-width="3" fill="none"/><path d="M47 -2L36 9" stroke="#8a9a30" stroke-width="5"/><path d="M37 8L26 19" stroke="#c8c0d8" stroke-width="5"/><path d="M36 7L26 17" stroke="#fff" stroke-width="1.3"/><path d="M38 10L28 20" stroke="#7a6a90" stroke-width="1"/><path d="M25.5 18c-3.5 1.5-6.5 4.5-8.5 8.5 4-1 7-3.5 10-6.5z" fill="#3a1a18" stroke="#3a1a18" stroke-width="3"/></svg>
<div class="a" style="left:142px;top:0px;width:45px;height:45px;background:linear-gradient(160deg,#dedede,#cacaca)"></div>
<svg class="a" style="left:142px;top:0px" width="45" height="45"><path d="M8 26c-2 6 4 12 14 12s14 0 20-4" stroke="#111" stroke-width="6" fill="none"/><path d="M24 36l20-6" stroke="#999" stroke-width="4"/><path d="M47 -2L36 9" stroke="#666" stroke-width="5"/><path d="M37 8L26 19" stroke="#c8c0d8" stroke-width="5"/><path d="M36 7L26 17" stroke="#fff" stroke-width="1.3"/><path d="M38 10L28 20" stroke="#7a6a90" stroke-width="1"/><path d="M25.5 18c-3.5 1.5-6.5 4.5-8.5 8.5 4-1 7-3.5 10-6.5z" fill="#a8a080" stroke="#a8a080" stroke-width="3"/></svg>
<div class="a" style="left:1px;top:47px;width:45px;height:45px;background:linear-gradient(160deg,#dedede,#cacaca)"></div>
<svg class="a" style="left:1px;top:47px" width="45" height="45"><path d="M2 36c8-6 20-4 30 0s10 2 14 0" stroke="#111" stroke-width="8" fill="none"/><path d="M47 -2L36 9" stroke="#222" stroke-width="5"/><path d="M37 8L26 19" stroke="#c8c0d8" stroke-width="5"/><path d="M36 7L26 17" stroke="#fff" stroke-width="1.3"/><path d="M38 10L28 20" stroke="#7a6a90" stroke-width="1"/><path d="M25.5 18c-3.5 1.5-6.5 4.5-8.5 8.5 4-1 7-3.5 10-6.5z" fill="#2a2a2a" stroke="#2a2a2a" stroke-width="3"/></svg>
<div class="a" style="left:48px;top:47px;width:45px;height:45px;background:linear-gradient(160deg,#dedede,#cacaca)"></div>
<svg class="a" style="left:48px;top:47px" width="45" height="45"><path d="M4 38c10-4 22-6 40-4" stroke="#888" stroke-width="8" fill="none"/><path d="M47 -2L36 9" stroke="#6a7a40" stroke-width="5"/><path d="M37 8L26 19" stroke="#c8c0d8" stroke-width="5"/><path d="M36 7L26 17" stroke="#fff" stroke-width="1.3"/><path d="M38 10L28 20" stroke="#7a6a90" stroke-width="1"/><path d="M25.5 18c-3.5 1.5-6.5 4.5-8.5 8.5 4-1 7-3.5 10-6.5z" fill="#3a2a28" stroke="#3a2a28" stroke-width="3"/></svg>
<div class="a" style="left:95px;top:47px;width:45px;height:45px;background:linear-gradient(160deg,#dedede,#cacaca)"></div>
<svg class="a" style="left:95px;top:47px" width="45" height="45"><path d="M6 38c8 2 18 0 30 2" stroke="#111" stroke-width="5" fill="none"/><path d="M47 -2L36 9" stroke="#ddd" stroke-width="5"/><path d="M37 8L26 19" stroke="#c8c0d8" stroke-width="5"/><path d="M36 7L26 17" stroke="#fff" stroke-width="1.3"/><path d="M38 10L28 20" stroke="#7a6a90" stroke-width="1"/><path d="M25.5 18c-3.5 1.5-6.5 4.5-8.5 8.5 4-1 7-3.5 10-6.5z" fill="#c8b890" stroke="#c8b890" stroke-width="3"/></svg>
<div class="a" style="left:142px;top:47px;width:45px;height:45px;background:linear-gradient(160deg,#dedede,#cacaca)"></div>
<svg class="a" style="left:142px;top:47px" width="45" height="45"><path d="M4 34c8-4 14 2 22 0s10 4 18 2" stroke="#222" stroke-width="9" fill="none" opacity=".85"/><path d="M47 -2L36 9" stroke="#ddd" stroke-width="5"/><path d="M37 8L26 19" stroke="#c8c0d8" stroke-width="5"/><path d="M36 7L26 17" stroke="#fff" stroke-width="1.3"/><path d="M38 10L28 20" stroke="#7a6a90" stroke-width="1"/><path d="M25.5 18c-3.5 1.5-6.5 4.5-8.5 8.5 4-1 7-3.5 10-6.5z" fill="#c8b080" stroke="#c8b080" stroke-width="3"/></svg>
<div class="a" style="left:1px;top:94px;width:45px;height:45px;background:linear-gradient(160deg,#dedede,#cacaca)"></div>
<svg class="a" style="left:1px;top:94px" width="45" height="45"><path d="M4 36c8-4 16 2 24 0s12-2 16 0" stroke="#1a1a1a" stroke-width="6" fill="none" opacity=".85"/><path d="M47 -2L36 9" stroke="#b07830" stroke-width="5"/><path d="M37 8L26 19" stroke="#c8c0d8" stroke-width="5"/><path d="M36 7L26 17" stroke="#fff" stroke-width="1.3"/><path d="M38 10L28 20" stroke="#7a6a90" stroke-width="1"/><path d="M25.5 18c-3.5 1.5-6.5 4.5-8.5 8.5 4-1 7-3.5 10-6.5z" fill="#c8a840" stroke="#c8a840" stroke-width="3"/></svg>
<div class="a" style="left:48px;top:94px;width:45px;height:45px;background:linear-gradient(160deg,#dedede,#cacaca)"></div>
<svg class="a" style="left:48px;top:94px" width="45" height="45"><path d="M4 36c8-4 16 2 24 0s12-2 16 0" stroke="#1a1a1a" stroke-width="6" fill="none" opacity=".85"/><path d="M47 -2L36 9" stroke="#333" stroke-width="5"/><path d="M37 8L26 19" stroke="#c8c0d8" stroke-width="5"/><path d="M36 7L26 17" stroke="#fff" stroke-width="1.3"/><path d="M38 10L28 20" stroke="#7a6a90" stroke-width="1"/><path d="M25.5 18c-3.5 1.5-6.5 4.5-8.5 8.5 4-1 7-3.5 10-6.5z" fill="#c8b890" stroke="#c8b890" stroke-width="3"/></svg>
<div class="a" style="left:95px;top:94px;width:45px;height:45px;background:linear-gradient(160deg,#dedede,#cacaca)"></div>
<svg class="a" style="left:95px;top:94px" width="45" height="45"><path d="M6 34c8-6 20-4 38-2" stroke="#2a2a2a" stroke-width="10" fill="none" opacity=".8"/><path d="M47 -2L36 9" stroke="#a04040" stroke-width="5"/><path d="M37 8L26 19" stroke="#c8c0d8" stroke-width="5"/><path d="M36 7L26 17" stroke="#fff" stroke-width="1.3"/><path d="M38 10L28 20" stroke="#7a6a90" stroke-width="1"/><path d="M25.5 18c-3.5 1.5-6.5 4.5-8.5 8.5 4-1 7-3.5 10-6.5z" fill="#c8b890" stroke="#c8b890" stroke-width="3"/></svg>
<div class="a" style="left:142px;top:94px;width:45px;height:45px;background:linear-gradient(160deg,#dedede,#cacaca)"></div>
<svg class="a" style="left:142px;top:94px" width="45" height="45"><path d="M4 34c10-2 24-2 40 2" stroke="#9a80e0" stroke-width="6" fill="none"/><path d="M30 35l14 2" stroke="#fff" stroke-width="4"/><path d="M47 -2L36 9" stroke="#777" stroke-width="5"/><path d="M37 8L26 19" stroke="#c8c0d8" stroke-width="5"/><path d="M36 7L26 17" stroke="#fff" stroke-width="1.3"/><path d="M38 10L28 20" stroke="#7a6a90" stroke-width="1"/><path d="M25.5 18c-3.5 1.5-6.5 4.5-8.5 8.5 4-1 7-3.5 10-6.5z" fill="#9a60d0" stroke="#9a60d0" stroke-width="3"/><path d="M8 9c-1 2-2 3-2 4a2 2 0 0 0 4 0c0-1-1-2-2-4z" fill="#4ab0f0"/></svg>
<div class="a" style="left:1px;top:141px;width:45px;height:45px;background:linear-gradient(160deg,#dedede,#cacaca)"></div>
<svg class="a" style="left:1px;top:141px" width="45" height="45"><path d="M4 34c10-2 24-2 40 2" stroke="#9a80e0" stroke-width="6" fill="none"/><path d="M30 35l14 2" stroke="#fff" stroke-width="4"/><path d="M47 -2L36 9" stroke="#8a5a30" stroke-width="5"/><path d="M37 8L26 19" stroke="#c8c0d8" stroke-width="5"/><path d="M36 7L26 17" stroke="#fff" stroke-width="1.3"/><path d="M38 10L28 20" stroke="#7a6a90" stroke-width="1"/><path d="M25.5 18c-3.5 1.5-6.5 4.5-8.5 8.5 4-1 7-3.5 10-6.5z" fill="#8a50c0" stroke="#8a50c0" stroke-width="3"/><path d="M8 9c-1 2-2 3-2 4a2 2 0 0 0 4 0c0-1-1-2-2-4z" fill="#4ab0f0"/></svg>
<div class="a" style="left:48px;top:141px;width:45px;height:45px;background:linear-gradient(160deg,#dedede,#cacaca)"></div>
<svg class="a" style="left:48px;top:141px" width="45" height="45"><path d="M4 36c10-2 24-2 40 2" stroke="#a080e0" stroke-width="5" fill="none"/><path d="M30 36l14 2" stroke="#fff" stroke-width="4"/><path d="M47 -2L36 9" stroke="#888" stroke-width="5"/><path d="M37 8L26 19" stroke="#c8c0d8" stroke-width="5"/><path d="M36 7L26 17" stroke="#fff" stroke-width="1.3"/><path d="M38 10L28 20" stroke="#7a6a90" stroke-width="1"/><path d="M25.5 18c-3.5 1.5-6.5 4.5-8.5 8.5 4-1 7-3.5 10-6.5z" fill="#aaa" stroke="#aaa" stroke-width="3"/><path d="M8 9c-1 2-2 3-2 4a2 2 0 0 0 4 0c0-1-1-2-2-4z" fill="#4ab0f0"/></svg>
<div class="a" style="left:95px;top:141px;width:45px;height:45px;background:linear-gradient(160deg,#dedede,#cacaca)"></div>
<svg class="a" style="left:95px;top:141px" width="45" height="45"><path d="M4 34c10-2 24-2 40 2" stroke="#9a80e0" stroke-width="6" fill="none"/><path d="M30 35l14 2" stroke="#fff" stroke-width="4"/><path d="M47 -2L36 9" stroke="#8a5a30" stroke-width="5"/><path d="M37 8L26 19" stroke="#c8c0d8" stroke-width="5"/><path d="M36 7L26 17" stroke="#fff" stroke-width="1.3"/><path d="M38 10L28 20" stroke="#7a6a90" stroke-width="1"/><path d="M25.5 18c-3.5 1.5-6.5 4.5-8.5 8.5 4-1 7-3.5 10-6.5z" fill="#2a1a18" stroke="#2a1a18" stroke-width="3"/><path d="M8 9c-1 2-2 3-2 4a2 2 0 0 0 4 0c0-1-1-2-2-4z" fill="#4ab0f0"/></svg>
<div class="a" style="left:142px;top:141px;width:45px;height:45px;background:linear-gradient(160deg,#dedede,#cacaca)"></div>
<svg class="a" style="left:142px;top:141px" width="45" height="45"><path d="M4 36c10-2 24-2 40 0" stroke="#80d070" stroke-width="5" fill="none"/><path d="M20 36h24" stroke="#f0f0f0" stroke-width="3"/><path d="M47 -2L36 9" stroke="#8a6a40" stroke-width="5"/><path d="M37 8L26 19" stroke="#c8c0d8" stroke-width="5"/><path d="M36 7L26 17" stroke="#fff" stroke-width="1.3"/><path d="M38 10L28 20" stroke="#7a6a90" stroke-width="1"/><path d="M25.5 18c-3.5 1.5-6.5 4.5-8.5 8.5 4-1 7-3.5 10-6.5z" fill="#3a2a28" stroke="#3a2a28" stroke-width="3"/><path d="M8 9c-1 2-2 3-2 4a2 2 0 0 0 4 0c0-1-1-2-2-4z" fill="#4ab0f0"/></svg>
<div class="a" style="left:1px;top:188px;width:45px;height:45px;background:linear-gradient(160deg,#dedede,#cacaca)"></div>
<svg class="a" style="left:1px;top:188px" width="45" height="45"><path d="M2 38c10-2 24-2 44 0" stroke="#80d070" stroke-width="6" fill="none" opacity=".8"/><path d="M47 -2L36 9" stroke="#5a8ab0" stroke-width="5"/><path d="M37 8L26 19" stroke="#c8c0d8" stroke-width="5"/><path d="M36 7L26 17" stroke="#fff" stroke-width="1.3"/><path d="M38 10L28 20" stroke="#7a6a90" stroke-width="1"/><path d="M25.5 18c-3.5 1.5-6.5 4.5-8.5 8.5 4-1 7-3.5 10-6.5z" fill="#4a2a28" stroke="#4a2a28" stroke-width="3"/><path d="M8 9c-1 2-2 3-2 4a2 2 0 0 0 4 0c0-1-1-2-2-4z" fill="#4ab0f0"/></svg>
<div class="a" style="left:48px;top:188px;width:45px;height:45px;background:linear-gradient(160deg,#dedede,#cacaca)"></div>
<svg class="a" style="left:48px;top:188px" width="45" height="45"><path d="M4 36c10-2 24-2 40 0" stroke="#80d070" stroke-width="5" fill="none"/><path d="M20 36h24" stroke="#f0f0f0" stroke-width="3"/><path d="M47 -2L36 9" stroke="#3a7ab0" stroke-width="5"/><path d="M37 8L26 19" stroke="#c8c0d8" stroke-width="5"/><path d="M36 7L26 17" stroke="#fff" stroke-width="1.3"/><path d="M38 10L28 20" stroke="#7a6a90" stroke-width="1"/><path d="M25.5 18c-3.5 1.5-6.5 4.5-8.5 8.5 4-1 7-3.5 10-6.5z" fill="#c08050" stroke="#c08050" stroke-width="3"/><path d="M8 9c-1 2-2 3-2 4a2 2 0 0 0 4 0c0-1-1-2-2-4z" fill="#4ab0f0"/></svg>
<div class="a" style="left:95px;top:188px;width:45px;height:45px;background:linear-gradient(160deg,#dedede,#cacaca)"></div>
<svg class="a" style="left:95px;top:188px" width="45" height="45"><path d="M4 36c10-2 24-2 40 0" stroke="#80d070" stroke-width="5" fill="none"/><path d="M20 36h24" stroke="#f0f0f0" stroke-width="3"/><path d="M47 -2L36 9" stroke="#3a7ab0" stroke-width="5"/><path d="M37 8L26 19" stroke="#c8c0d8" stroke-width="5"/><path d="M36 7L26 17" stroke="#fff" stroke-width="1.3"/><path d="M38 10L28 20" stroke="#7a6a90" stroke-width="1"/><path d="M25.5 18c-3.5 1.5-6.5 4.5-8.5 8.5 4-1 7-3.5 10-6.5z" fill="#c08050" stroke="#c08050" stroke-width="3"/><path d="M8 9c-1 2-2 3-2 4a2 2 0 0 0 4 0c0-1-1-2-2-4z" fill="#4ab0f0"/></svg>
<div class="a" style="left:142px;top:188px;width:45px;height:45px;background:linear-gradient(160deg,#dedede,#cacaca)"></div>
<svg class="a" style="left:142px;top:188px" width="45" height="45"><path d="M4 36c10-2 24-2 40 0" stroke="#f4f4f4" stroke-width="4" fill="none"/><path d="M47 -2L36 9" stroke="#6aa0d0" stroke-width="5"/><path d="M37 8L26 19" stroke="#c8c0d8" stroke-width="5"/><path d="M36 7L26 17" stroke="#fff" stroke-width="1.3"/><path d="M38 10L28 20" stroke="#7a6a90" stroke-width="1"/><path d="M25.5 18c-3.5 1.5-6.5 4.5-8.5 8.5 4-1 7-3.5 10-6.5z" fill="#fff" stroke="#fff" stroke-width="3"/><path d="M8 9c-1 2-2 3-2 4a2 2 0 0 0 4 0c0-1-1-2-2-4z" fill="#4ab0f0"/></svg>
</div>
<div class="a" style="left:1492px;top:566px;width:11px;height:227px;background:#3a3a3a"></div>
<div class="a" style="left:1492px;top:566px;width:11px;height:11px;background:#474747;border:1px solid #555"></div><div class="a" style="left:1494px;top:570px;border-left:3.5px solid transparent;border-right:3.5px solid transparent;border-bottom:3.5px solid #ccc"></div>
<div class="a" style="left:1493px;top:578px;width:9px;height:140px;background:#3e3e3e;border:1px solid #4a4a4a"></div>
<div class="a" style="left:1492px;top:782px;width:11px;height:11px;background:#474747;border:1px solid #555"></div><div class="a" style="left:1494px;top:786px;border-left:3.5px solid transparent;border-right:3.5px solid transparent;border-top:3.5px solid #ccc"></div>
<div class="a" style="left:1300px;top:794px;width:119px;height:21px;background:#3c3c3c;border-radius:2px"></div>
<div class="t" style="left:1302px;top:799px;font-size:11.5px;color:#7a7a7a">Search</div>
<div class="a" style="left:1424px;top:798px;width:10px;height:11px;background:#3e3e3e"></div>
<svg class="a" style="left:1424px;top:798px" width="10" height="11" fill="none" stroke="#e8e8e8" stroke-width="1.2"><path d="M2 5.5l2 3 4-7"/></svg>
<div class="t" style="left:1439px;top:799px;font-size:11.5px">Filter in Tag</div>
<!-- status -->
<svg class="a" style="left:4px;top:824px" width="14" height="14" fill="none" stroke="#d0d0d0" stroke-width="1"><rect x="1.5" y="1.5" width="11" height="11"/><circle cx="7" cy="7" r="3.3" stroke-dasharray="1.2 1"/></svg>
<div class="t" style="left:355px;top:826px">RGB/Alpha (8-bit integer/channel)&nbsp; sRGB-elle-V2-srgbtrc.icc</div>
<div class="a" style="left:1063px;top:819px;width:136px;height:24px;background:#3e3e3e;border:1px solid #444;border-radius:2px"></div>
<div class="a" style="left:1065px;top:822px;width:14px;height:19px;background:#52708f"></div>
<div class="t" style="left:1066px;top:826px;font-size:12.5px">4.042 <u>x</u> 6.000 (3,0 GiB)</div>
<div class="a" style="left:1206px;top:821px;width:21px;height:21px;border-radius:50%;background:#2e2e2e"></div>
<svg class="a" style="left:1206px;top:821px" width="22" height="22"><path d="M10.5 10.5h8" stroke="#eee" stroke-width="1.4"/><circle cx="10.5" cy="10.5" r="1.3" fill="#eee"/><circle cx="18.5" cy="10.5" r="1.3" fill="#eee"/></svg>
<div class="t" style="left:1257px;top:826px;font-size:12px">0,00°</div>
<div class="t" style="left:1371px;top:827px;font-size:12.3px">15,5%</div>
<div class="a" style="left:1420px;top:829px;width:64px;height:5px;background:#363636;border-radius:3px"></div>
<div class="a" style="left:1420px;top:830px;width:12px;height:3px;background:#7aa0c8;border-radius:2px"></div>
<div class="a" style="left:1430px;top:826px;width:9px;height:10px;background:#444;border:1px solid #5c5c5c;border-radius:3px"></div>
<div class="a" style="left:1485px;top:822px;width:17px;height:19px;background:#3c3c3c;border:1px solid #353535;border-radius:3px"></div>
<svg class="a" style="left:1485px;top:822px" width="17" height="19"><rect x="4.5" y="3.5" width="9" height="12" fill="#111" stroke="#ddd" stroke-width="1"/><rect x="7" y="7.5" width="4" height="4" fill="none" stroke="#f0f0f0" stroke-width="1.3"/></svg>
</body></html>
